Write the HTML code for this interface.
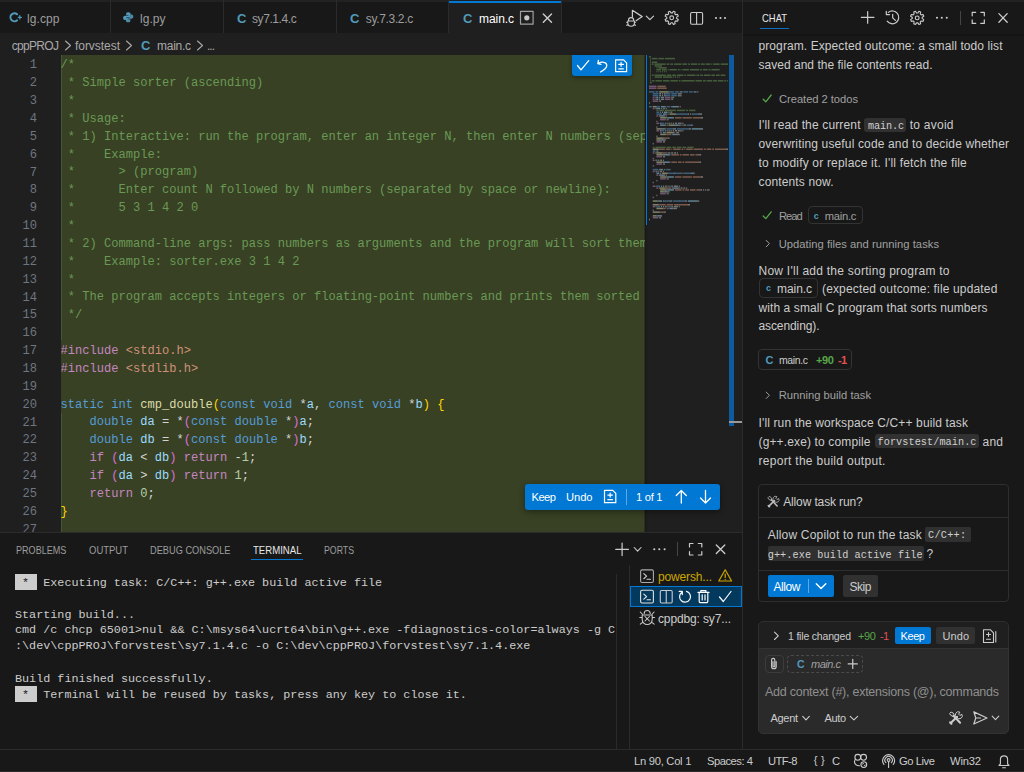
<!DOCTYPE html>
<html><head><meta charset="utf-8"><style>
html,body{margin:0;padding:0;}
body{width:1024px;height:772px;overflow:hidden;position:relative;background:#181818;font-family:'Liberation Sans', sans-serif;}
.t{position:absolute;white-space:pre;}
svg{overflow:visible}
</style></head><body>
<div style="position:absolute;left:0px;top:0px;width:1024px;height:772px;background:#181818;"></div>
<div style="position:absolute;left:0px;top:0px;width:742px;height:33px;background:#181818;"></div>
<div style="position:absolute;left:0px;top:0px;width:1024px;height:2px;background:#222222;"></div>
<div style="position:absolute;left:110px;top:0px;width:1px;height:33px;background:#2b2b2b;"></div>
<div style="position:absolute;left:223px;top:0px;width:1px;height:33px;background:#2b2b2b;"></div>
<div style="position:absolute;left:336px;top:0px;width:1px;height:33px;background:#2b2b2b;"></div>
<div style="position:absolute;left:448px;top:0px;width:1px;height:33px;background:#2b2b2b;"></div>
<div style="position:absolute;left:561px;top:0px;width:1px;height:33px;background:#2b2b2b;"></div>
<div style="position:absolute;left:449px;top:0px;width:112px;height:34px;background:#1f1f1f;"></div>
<div style="position:absolute;left:449px;top:1px;width:112px;height:2px;background:#0078d4;"></div>
<div style="position:absolute;left:0px;top:33px;width:742px;height:499px;background:#1f1f1f;"></div>
<div style="position:absolute;left:61px;top:55px;width:584px;height:477px;background:#384124;"></div>
<div style="position:absolute;left:61px;top:55px;width:1.2px;height:285px;background:#4a5535;"></div>
<div style="position:absolute;left:61px;top:413px;width:1.2px;height:119px;background:#4a5535;"></div>
<div style="position:absolute;left:729px;top:55px;width:5px;height:371px;background:#0e5a9e;"></div>
<div style="position:absolute;left:729px;top:421px;width:13px;height:2px;background:#9a9a9a;"></div>
<div style="position:absolute;left:644px;top:55px;width:4px;height:477px;background:linear-gradient(90deg, rgba(0,0,0,0.28), rgba(0,0,0,0));"></div>
<div style="position:absolute;left:645.8px;top:55px;width:1.4px;height:170px;background:#0078d4;"></div>
<div style="position:absolute;left:742px;top:0px;width:1px;height:750px;background:#2b2b2b;"></div>
<div style="position:absolute;left:0px;top:532px;width:742px;height:218px;background:#181818;"></div>
<div style="position:absolute;left:0px;top:532px;width:742px;height:1px;background:#2b2b2b;"></div>
<div style="position:absolute;left:616px;top:574px;width:1px;height:176px;background:#2a2a2a;"></div>
<div style="position:absolute;left:629px;top:565px;width:1px;height:185px;background:#2b2b2b;"></div>
<div style="position:absolute;left:630px;top:586px;width:112px;height:21px;background:#04395e;box-shadow:inset 0 0 0 1px #0078d4;"></div>
<div style="position:absolute;left:0px;top:749px;width:1024px;height:1px;background:#2b2b2b;"></div>
<div style="position:absolute;left:0px;top:750px;width:1024px;height:22px;background:#181818;"></div>
<div style="position:absolute;left:0px;top:771px;width:1024px;height:1px;background:#2a2a2a;"></div>
<div style="position:absolute;left:743px;top:33.5px;width:281px;height:3.5px;background:linear-gradient(#121212,#181818);"></div>
<div style="position:absolute;left:61px;top:55px;width:584px;height:477px;overflow:hidden"><div class="t" style="left:-0.4px;top:2.20px;font-family:'Liberation Mono', monospace;font-size:12.07px;line-height:17.86px"><span style="color:#6a9955">/*</span></div><div class="t" style="left:-0.4px;top:20.06px;font-family:'Liberation Mono', monospace;font-size:12.07px;line-height:17.86px"><span style="color:#6a9955"> * Simple sorter (ascending)</span></div><div class="t" style="left:-0.4px;top:37.92px;font-family:'Liberation Mono', monospace;font-size:12.07px;line-height:17.86px"><span style="color:#6a9955"> *</span></div><div class="t" style="left:-0.4px;top:55.78px;font-family:'Liberation Mono', monospace;font-size:12.07px;line-height:17.86px"><span style="color:#6a9955"> * Usage:</span></div><div class="t" style="left:-0.4px;top:73.64px;font-family:'Liberation Mono', monospace;font-size:12.07px;line-height:17.86px"><span style="color:#6a9955"> * 1) Interactive: run the program, enter an integer N, then enter N numbers (separated by space or newline).</span></div><div class="t" style="left:-0.4px;top:91.50px;font-family:'Liberation Mono', monospace;font-size:12.07px;line-height:17.86px"><span style="color:#6a9955"> *    Example:</span></div><div class="t" style="left:-0.4px;top:109.36px;font-family:'Liberation Mono', monospace;font-size:12.07px;line-height:17.86px"><span style="color:#6a9955"> *      &gt; (program)</span></div><div class="t" style="left:-0.4px;top:127.22px;font-family:'Liberation Mono', monospace;font-size:12.07px;line-height:17.86px"><span style="color:#6a9955"> *      Enter count N followed by N numbers (separated by space or newline):</span></div><div class="t" style="left:-0.4px;top:145.08px;font-family:'Liberation Mono', monospace;font-size:12.07px;line-height:17.86px"><span style="color:#6a9955"> *      5 3 1 4 2 0</span></div><div class="t" style="left:-0.4px;top:162.94px;font-family:'Liberation Mono', monospace;font-size:12.07px;line-height:17.86px"><span style="color:#6a9955"> *</span></div><div class="t" style="left:-0.4px;top:180.80px;font-family:'Liberation Mono', monospace;font-size:12.07px;line-height:17.86px"><span style="color:#6a9955"> * 2) Command-line args: pass numbers as arguments and the program will sort them.</span></div><div class="t" style="left:-0.4px;top:198.66px;font-family:'Liberation Mono', monospace;font-size:12.07px;line-height:17.86px"><span style="color:#6a9955"> *    Example: sorter.exe 3 1 4 2</span></div><div class="t" style="left:-0.4px;top:216.52px;font-family:'Liberation Mono', monospace;font-size:12.07px;line-height:17.86px"><span style="color:#6a9955"> *</span></div><div class="t" style="left:-0.4px;top:234.38px;font-family:'Liberation Mono', monospace;font-size:12.07px;line-height:17.86px"><span style="color:#6a9955"> * The program accepts integers or floating-point numbers and prints them sorted in ascending order.</span></div><div class="t" style="left:-0.4px;top:252.24px;font-family:'Liberation Mono', monospace;font-size:12.07px;line-height:17.86px"><span style="color:#6a9955"> */</span></div><div class="t" style="left:-0.4px;top:270.10px;font-family:'Liberation Mono', monospace;font-size:12.07px;line-height:17.86px"></div><div class="t" style="left:-0.4px;top:287.96px;font-family:'Liberation Mono', monospace;font-size:12.07px;line-height:17.86px"><span style="color:#c586c0">#include</span><span style="color:#d4d4d4"> </span><span style="color:#ce9178">&lt;stdio.h&gt;</span></div><div class="t" style="left:-0.4px;top:305.82px;font-family:'Liberation Mono', monospace;font-size:12.07px;line-height:17.86px"><span style="color:#c586c0">#include</span><span style="color:#d4d4d4"> </span><span style="color:#ce9178">&lt;stdlib.h&gt;</span></div><div class="t" style="left:-0.4px;top:323.68px;font-family:'Liberation Mono', monospace;font-size:12.07px;line-height:17.86px"></div><div class="t" style="left:-0.4px;top:341.54px;font-family:'Liberation Mono', monospace;font-size:12.07px;line-height:17.86px"><span style="color:#569cd6">static</span><span style="color:#d4d4d4"> </span><span style="color:#569cd6">int</span><span style="color:#d4d4d4"> </span><span style="color:#dcdcaa">cmp_double</span><span style="color:#ffd700">(</span><span style="color:#569cd6">const</span><span style="color:#d4d4d4"> </span><span style="color:#569cd6">void</span><span style="color:#d4d4d4"> *</span><span style="color:#9cdcfe">a</span><span style="color:#d4d4d4">, </span><span style="color:#569cd6">const</span><span style="color:#d4d4d4"> </span><span style="color:#569cd6">void</span><span style="color:#d4d4d4"> *</span><span style="color:#9cdcfe">b</span><span style="color:#ffd700">)</span><span style="color:#d4d4d4"> </span><span style="color:#ffd700">{</span></div><div class="t" style="left:-0.4px;top:359.40px;font-family:'Liberation Mono', monospace;font-size:12.07px;line-height:17.86px"><span style="color:#d4d4d4">    </span><span style="color:#569cd6">double</span><span style="color:#d4d4d4"> </span><span style="color:#9cdcfe">da</span><span style="color:#d4d4d4"> = *</span><span style="color:#da70d6">(</span><span style="color:#569cd6">const</span><span style="color:#d4d4d4"> </span><span style="color:#569cd6">double</span><span style="color:#d4d4d4"> *</span><span style="color:#da70d6">)</span><span style="color:#9cdcfe">a</span><span style="color:#d4d4d4">;</span></div><div class="t" style="left:-0.4px;top:377.26px;font-family:'Liberation Mono', monospace;font-size:12.07px;line-height:17.86px"><span style="color:#d4d4d4">    </span><span style="color:#569cd6">double</span><span style="color:#d4d4d4"> </span><span style="color:#9cdcfe">db</span><span style="color:#d4d4d4"> = *</span><span style="color:#da70d6">(</span><span style="color:#569cd6">const</span><span style="color:#d4d4d4"> </span><span style="color:#569cd6">double</span><span style="color:#d4d4d4"> *</span><span style="color:#da70d6">)</span><span style="color:#9cdcfe">b</span><span style="color:#d4d4d4">;</span></div><div class="t" style="left:-0.4px;top:395.12px;font-family:'Liberation Mono', monospace;font-size:12.07px;line-height:17.86px"><span style="color:#d4d4d4">    </span><span style="color:#c586c0">if</span><span style="color:#d4d4d4"> </span><span style="color:#da70d6">(</span><span style="color:#9cdcfe">da</span><span style="color:#d4d4d4"> &lt; </span><span style="color:#9cdcfe">db</span><span style="color:#da70d6">)</span><span style="color:#d4d4d4"> </span><span style="color:#c586c0">return</span><span style="color:#d4d4d4"> -</span><span style="color:#b5cea8">1</span><span style="color:#d4d4d4">;</span></div><div class="t" style="left:-0.4px;top:412.98px;font-family:'Liberation Mono', monospace;font-size:12.07px;line-height:17.86px"><span style="color:#d4d4d4">    </span><span style="color:#c586c0">if</span><span style="color:#d4d4d4"> </span><span style="color:#da70d6">(</span><span style="color:#9cdcfe">da</span><span style="color:#d4d4d4"> &gt; </span><span style="color:#9cdcfe">db</span><span style="color:#da70d6">)</span><span style="color:#d4d4d4"> </span><span style="color:#c586c0">return</span><span style="color:#d4d4d4"> </span><span style="color:#b5cea8">1</span><span style="color:#d4d4d4">;</span></div><div class="t" style="left:-0.4px;top:430.84px;font-family:'Liberation Mono', monospace;font-size:12.07px;line-height:17.86px"><span style="color:#d4d4d4">    </span><span style="color:#c586c0">return</span><span style="color:#d4d4d4"> </span><span style="color:#b5cea8">0</span><span style="color:#d4d4d4">;</span></div><div class="t" style="left:-0.4px;top:448.70px;font-family:'Liberation Mono', monospace;font-size:12.07px;line-height:17.86px"><span style="color:#ffd700">}</span></div><div class="t" style="left:-0.4px;top:466.56px;font-family:'Liberation Mono', monospace;font-size:12.07px;line-height:17.86px"></div></div>
<div style="position:absolute;left:0;top:55px;width:37px;height:477px;overflow:hidden"><div class="t" style="right:0;top:2.40px;font-family:'Liberation Mono', monospace;font-size:12.07px;line-height:17.86px;color:#6e7681">1</div><div class="t" style="right:0;top:20.26px;font-family:'Liberation Mono', monospace;font-size:12.07px;line-height:17.86px;color:#6e7681">2</div><div class="t" style="right:0;top:38.12px;font-family:'Liberation Mono', monospace;font-size:12.07px;line-height:17.86px;color:#6e7681">3</div><div class="t" style="right:0;top:55.98px;font-family:'Liberation Mono', monospace;font-size:12.07px;line-height:17.86px;color:#6e7681">4</div><div class="t" style="right:0;top:73.84px;font-family:'Liberation Mono', monospace;font-size:12.07px;line-height:17.86px;color:#6e7681">5</div><div class="t" style="right:0;top:91.70px;font-family:'Liberation Mono', monospace;font-size:12.07px;line-height:17.86px;color:#6e7681">6</div><div class="t" style="right:0;top:109.56px;font-family:'Liberation Mono', monospace;font-size:12.07px;line-height:17.86px;color:#6e7681">7</div><div class="t" style="right:0;top:127.42px;font-family:'Liberation Mono', monospace;font-size:12.07px;line-height:17.86px;color:#6e7681">8</div><div class="t" style="right:0;top:145.28px;font-family:'Liberation Mono', monospace;font-size:12.07px;line-height:17.86px;color:#6e7681">9</div><div class="t" style="right:0;top:163.14px;font-family:'Liberation Mono', monospace;font-size:12.07px;line-height:17.86px;color:#6e7681">10</div><div class="t" style="right:0;top:181.00px;font-family:'Liberation Mono', monospace;font-size:12.07px;line-height:17.86px;color:#6e7681">11</div><div class="t" style="right:0;top:198.86px;font-family:'Liberation Mono', monospace;font-size:12.07px;line-height:17.86px;color:#6e7681">12</div><div class="t" style="right:0;top:216.72px;font-family:'Liberation Mono', monospace;font-size:12.07px;line-height:17.86px;color:#6e7681">13</div><div class="t" style="right:0;top:234.58px;font-family:'Liberation Mono', monospace;font-size:12.07px;line-height:17.86px;color:#6e7681">14</div><div class="t" style="right:0;top:252.44px;font-family:'Liberation Mono', monospace;font-size:12.07px;line-height:17.86px;color:#6e7681">15</div><div class="t" style="right:0;top:270.30px;font-family:'Liberation Mono', monospace;font-size:12.07px;line-height:17.86px;color:#6e7681">16</div><div class="t" style="right:0;top:288.16px;font-family:'Liberation Mono', monospace;font-size:12.07px;line-height:17.86px;color:#6e7681">17</div><div class="t" style="right:0;top:306.02px;font-family:'Liberation Mono', monospace;font-size:12.07px;line-height:17.86px;color:#6e7681">18</div><div class="t" style="right:0;top:323.88px;font-family:'Liberation Mono', monospace;font-size:12.07px;line-height:17.86px;color:#6e7681">19</div><div class="t" style="right:0;top:341.74px;font-family:'Liberation Mono', monospace;font-size:12.07px;line-height:17.86px;color:#6e7681">20</div><div class="t" style="right:0;top:359.60px;font-family:'Liberation Mono', monospace;font-size:12.07px;line-height:17.86px;color:#6e7681">21</div><div class="t" style="right:0;top:377.46px;font-family:'Liberation Mono', monospace;font-size:12.07px;line-height:17.86px;color:#6e7681">22</div><div class="t" style="right:0;top:395.32px;font-family:'Liberation Mono', monospace;font-size:12.07px;line-height:17.86px;color:#6e7681">23</div><div class="t" style="right:0;top:413.18px;font-family:'Liberation Mono', monospace;font-size:12.07px;line-height:17.86px;color:#6e7681">24</div><div class="t" style="right:0;top:431.04px;font-family:'Liberation Mono', monospace;font-size:12.07px;line-height:17.86px;color:#6e7681">25</div><div class="t" style="right:0;top:448.90px;font-family:'Liberation Mono', monospace;font-size:12.07px;line-height:17.86px;color:#6e7681">26</div><div class="t" style="right:0;top:466.76px;font-family:'Liberation Mono', monospace;font-size:12.07px;line-height:17.86px;color:#6e7681">27</div></div>
<div style="position:absolute;left:15px;top:574px;width:22px;height:16px;background:#cccccc;"></div>
<div style="position:absolute;left:15px;top:686px;width:22px;height:16px;background:#cccccc;"></div>
<div style="position:absolute;left:0;top:620px;width:616px;height:40px;overflow:hidden"><div class="t" style="left:15px;top:4.20px;font-size:11.77px;line-height:13.333px;font-family:'Liberation Mono', monospace;color:#cccccc">cmd /c chcp 65001&gt;nul &amp;&amp; C:\msys64\ucrt64\bin\g++.exe -fdiagnostics-color=always -g C</div><div class="t" style="left:15px;top:20.20px;font-size:11.77px;line-height:13.333px;font-family:'Liberation Mono', monospace;color:#cccccc">:\dev\cppPROJ\forvstest\sy7.1.4.c -o C:\dev\cppPROJ\forvstest\sy7.1.4.exe</div></div>
<div style="position:absolute;left:251px;top:559px;width:52px;height:1px;background:#0078d4;"></div>
<div style="position:absolute;left:760px;top:28px;width:29px;height:1.3px;background:#0a6fc2;"></div>
<div style="position:absolute;left:864px;top:118.4px;width:42px;height:14px;background:#313131;border-radius:3px;"></div>
<div style="position:absolute;left:808px;top:206px;width:54.6px;height:18.2px;background:transparent;box-sizing:border-box;border:1px solid #333333;border-radius:4px;"></div>
<div style="position:absolute;left:759px;top:278.3px;width:59px;height:19.4px;background:transparent;box-sizing:border-box;border:1px solid #333333;border-radius:4px;"></div>
<div style="position:absolute;left:758px;top:349.2px;width:93.6px;height:20.4px;background:transparent;box-sizing:border-box;border:1px solid #333333;border-radius:4px;"></div>
<div style="position:absolute;left:875px;top:434.4px;width:104.2px;height:14.1px;background:#313131;border-radius:3px;"></div>
<div style="position:absolute;left:758px;top:484.4px;width:250.8px;height:117.7px;background:transparent;box-sizing:border-box;border:1px solid #2e2e2e;border-radius:4px;"></div>
<div style="position:absolute;left:759px;top:517px;width:249px;height:1px;background:#2e2e2e;"></div>
<div style="position:absolute;left:759px;top:569.5px;width:249px;height:1px;background:#2e2e2e;"></div>
<div style="position:absolute;left:925.4px;top:527.3px;width:45.4px;height:14.5px;background:#303030;border-radius:2px;"></div>
<div style="position:absolute;left:767.7px;top:546.4px;width:156.3px;height:14.4px;background:#303030;border-radius:2px;"></div>
<div style="position:absolute;left:767.7px;top:575px;width:66px;height:22px;background:#0078d4;border-radius:2px;"></div>
<div style="position:absolute;left:808px;top:579px;width:1px;height:14px;background:#5fa7e6;"></div>
<div style="position:absolute;left:843.3px;top:575px;width:34.5px;height:22px;background:#313131;border-radius:2px;"></div>
<div style="position:absolute;left:758.4px;top:621px;width:250.8px;height:113.4px;background:#1f1f1f;box-sizing:border-box;border:1px solid #2e2e2e;border-radius:5px;"></div>
<div style="position:absolute;left:758.4px;top:648.2px;width:250.8px;height:86.2px;background:#2a2a2a;border-radius:0 0 5px 5px;border:1px solid #333;box-sizing:border-box;"></div>
<div style="position:absolute;left:894.5px;top:627.4px;width:36.4px;height:16.3px;background:#0078d4;border-radius:2px;"></div>
<div style="position:absolute;left:936.4px;top:627.4px;width:38.2px;height:16.3px;background:#313131;border-radius:2px;"></div>
<div style="position:absolute;left:765px;top:655.3px;width:18.5px;height:18px;background:transparent;box-sizing:border-box;border:1px solid #3c3c3c;border-radius:4px;"></div>
<div style="position:absolute;left:787.4px;top:655.3px;width:76px;height:18px;background:transparent;box-sizing:border-box;border:1px dashed #4a4a4a;border-radius:4px;"></div>
<svg style="position:absolute;left:122.8px;top:12.3px;" width="10.5" height="10.5" viewBox="0 0 11 11" fill="none"><path d="M5.5 0.3C3.5 0.3 3.3 1.2 3.3 2.2V3.5H5.8V4H2.2C1 4 0.2 4.9 0.2 6.3C0.2 7.7 1 8.5 2 8.5H3V7C3 6 3.8 5.3 4.7 5.3H7C7.7 5.3 8 4.8 8 4.2V2.2C8 1.2 7.4 0.3 5.5 0.3Z" fill="#519aba"/><path d="M5.5 10.7C7.5 10.7 7.7 9.8 7.7 8.8V7.5H5.2V7H8.8C10 7 10.8 6.1 10.8 4.7C10.8 3.3 10 2.5 9 2.5H8V4C8 5 7.2 5.7 6.3 5.7H4C3.3 5.7 3 6.2 3 6.8V8.8C3 9.8 3.6 10.7 5.5 10.7Z" fill="#519aba" opacity="0.9"/></svg>
<div style="position:absolute;left:572px;top:55px;width:60px;height:21px;background:#0078d4;border-radius:0 0 3px 3px;box-shadow:0 2px 4px rgba(0,0,0,0.35);"></div>
<div style="position:absolute;left:525px;top:483.6px;width:194.6px;height:26px;background:#0078d4;border-radius:3px;box-shadow:0 2px 6px rgba(0,0,0,0.4);"></div>
<div style="position:absolute;left:626px;top:489px;width:1px;height:16px;background:#5fa7e6;"></div>
<div style="position:absolute;left:960px;top:10.7px;width:1px;height:14.3px;background:#454545;"></div>
<div style="position:absolute;left:677px;top:542px;width:1px;height:14px;background:#454545;"></div>
<svg style="position:absolute;left:649px;top:56.0px;" width="80" height="170" viewBox="0 0 80 170" fill="none"><g opacity="0.52"><rect x="0.00" y="0.00" width="1.86" height="1.5" fill="#6a9955"/><rect x="0.93" y="1.85" width="0.93" height="1.5" fill="#6a9955"/><rect x="2.79" y="1.85" width="5.58" height="1.5" fill="#6a9955"/><rect x="9.30" y="1.85" width="5.58" height="1.5" fill="#6a9955"/><rect x="15.81" y="1.85" width="10.23" height="1.5" fill="#6a9955"/><rect x="0.93" y="3.70" width="0.93" height="1.5" fill="#6a9955"/><rect x="0.93" y="5.55" width="0.93" height="1.5" fill="#6a9955"/><rect x="2.79" y="5.55" width="5.58" height="1.5" fill="#6a9955"/><rect x="0.93" y="7.40" width="0.93" height="1.5" fill="#6a9955"/><rect x="2.79" y="7.40" width="1.86" height="1.5" fill="#6a9955"/><rect x="5.58" y="7.40" width="11.16" height="1.5" fill="#6a9955"/><rect x="17.67" y="7.40" width="2.79" height="1.5" fill="#6a9955"/><rect x="21.39" y="7.40" width="2.79" height="1.5" fill="#6a9955"/><rect x="25.11" y="7.40" width="7.44" height="1.5" fill="#6a9955"/><rect x="33.48" y="7.40" width="4.65" height="1.5" fill="#6a9955"/><rect x="39.06" y="7.40" width="1.86" height="1.5" fill="#6a9955"/><rect x="41.85" y="7.40" width="6.51" height="1.5" fill="#6a9955"/><rect x="49.29" y="7.40" width="1.86" height="1.5" fill="#6a9955"/><rect x="52.08" y="7.40" width="3.72" height="1.5" fill="#6a9955"/><rect x="56.73" y="7.40" width="4.65" height="1.5" fill="#6a9955"/><rect x="62.31" y="7.40" width="0.93" height="1.5" fill="#6a9955"/><rect x="64.17" y="7.40" width="6.51" height="1.5" fill="#6a9955"/><rect x="71.61" y="7.40" width="7.39" height="1.5" fill="#6a9955"/><rect x="0.93" y="9.25" width="0.93" height="1.5" fill="#6a9955"/><rect x="5.58" y="9.25" width="7.44" height="1.5" fill="#6a9955"/><rect x="0.93" y="11.10" width="0.93" height="1.5" fill="#6a9955"/><rect x="7.44" y="11.10" width="0.93" height="1.5" fill="#6a9955"/><rect x="9.30" y="11.10" width="8.37" height="1.5" fill="#6a9955"/><rect x="0.93" y="12.95" width="0.93" height="1.5" fill="#6a9955"/><rect x="7.44" y="12.95" width="4.65" height="1.5" fill="#6a9955"/><rect x="13.02" y="12.95" width="4.65" height="1.5" fill="#6a9955"/><rect x="18.60" y="12.95" width="0.93" height="1.5" fill="#6a9955"/><rect x="20.46" y="12.95" width="7.44" height="1.5" fill="#6a9955"/><rect x="28.83" y="12.95" width="1.86" height="1.5" fill="#6a9955"/><rect x="31.62" y="12.95" width="0.93" height="1.5" fill="#6a9955"/><rect x="33.48" y="12.95" width="6.51" height="1.5" fill="#6a9955"/><rect x="40.92" y="12.95" width="9.30" height="1.5" fill="#6a9955"/><rect x="51.15" y="12.95" width="1.86" height="1.5" fill="#6a9955"/><rect x="53.94" y="12.95" width="4.65" height="1.5" fill="#6a9955"/><rect x="59.52" y="12.95" width="1.86" height="1.5" fill="#6a9955"/><rect x="62.31" y="12.95" width="8.37" height="1.5" fill="#6a9955"/><rect x="0.93" y="14.80" width="0.93" height="1.5" fill="#6a9955"/><rect x="7.44" y="14.80" width="0.93" height="1.5" fill="#6a9955"/><rect x="9.30" y="14.80" width="0.93" height="1.5" fill="#6a9955"/><rect x="11.16" y="14.80" width="0.93" height="1.5" fill="#6a9955"/><rect x="13.02" y="14.80" width="0.93" height="1.5" fill="#6a9955"/><rect x="14.88" y="14.80" width="0.93" height="1.5" fill="#6a9955"/><rect x="16.74" y="14.80" width="0.93" height="1.5" fill="#6a9955"/><rect x="0.93" y="16.65" width="0.93" height="1.5" fill="#6a9955"/><rect x="0.93" y="18.50" width="0.93" height="1.5" fill="#6a9955"/><rect x="2.79" y="18.50" width="1.86" height="1.5" fill="#6a9955"/><rect x="5.58" y="18.50" width="11.16" height="1.5" fill="#6a9955"/><rect x="17.67" y="18.50" width="4.65" height="1.5" fill="#6a9955"/><rect x="23.25" y="18.50" width="3.72" height="1.5" fill="#6a9955"/><rect x="27.90" y="18.50" width="6.51" height="1.5" fill="#6a9955"/><rect x="35.34" y="18.50" width="1.86" height="1.5" fill="#6a9955"/><rect x="38.13" y="18.50" width="8.37" height="1.5" fill="#6a9955"/><rect x="47.43" y="18.50" width="2.79" height="1.5" fill="#6a9955"/><rect x="51.15" y="18.50" width="2.79" height="1.5" fill="#6a9955"/><rect x="54.87" y="18.50" width="6.51" height="1.5" fill="#6a9955"/><rect x="62.31" y="18.50" width="3.72" height="1.5" fill="#6a9955"/><rect x="66.96" y="18.50" width="3.72" height="1.5" fill="#6a9955"/><rect x="71.61" y="18.50" width="4.65" height="1.5" fill="#6a9955"/><rect x="0.93" y="20.35" width="0.93" height="1.5" fill="#6a9955"/><rect x="5.58" y="20.35" width="7.44" height="1.5" fill="#6a9955"/><rect x="13.95" y="20.35" width="9.30" height="1.5" fill="#6a9955"/><rect x="24.18" y="20.35" width="0.93" height="1.5" fill="#6a9955"/><rect x="26.04" y="20.35" width="0.93" height="1.5" fill="#6a9955"/><rect x="27.90" y="20.35" width="0.93" height="1.5" fill="#6a9955"/><rect x="29.76" y="20.35" width="0.93" height="1.5" fill="#6a9955"/><rect x="0.93" y="22.20" width="0.93" height="1.5" fill="#6a9955"/><rect x="0.93" y="24.05" width="0.93" height="1.5" fill="#6a9955"/><rect x="2.79" y="24.05" width="2.79" height="1.5" fill="#6a9955"/><rect x="6.51" y="24.05" width="6.51" height="1.5" fill="#6a9955"/><rect x="13.95" y="24.05" width="6.51" height="1.5" fill="#6a9955"/><rect x="21.39" y="24.05" width="7.44" height="1.5" fill="#6a9955"/><rect x="29.76" y="24.05" width="1.86" height="1.5" fill="#6a9955"/><rect x="32.55" y="24.05" width="13.02" height="1.5" fill="#6a9955"/><rect x="46.50" y="24.05" width="6.51" height="1.5" fill="#6a9955"/><rect x="53.94" y="24.05" width="2.79" height="1.5" fill="#6a9955"/><rect x="57.66" y="24.05" width="5.58" height="1.5" fill="#6a9955"/><rect x="64.17" y="24.05" width="3.72" height="1.5" fill="#6a9955"/><rect x="68.82" y="24.05" width="5.58" height="1.5" fill="#6a9955"/><rect x="75.33" y="24.05" width="1.86" height="1.5" fill="#6a9955"/><rect x="78.12" y="24.05" width="0.88" height="1.5" fill="#6a9955"/><rect x="0.93" y="25.90" width="1.86" height="1.5" fill="#6a9955"/><rect x="0.00" y="29.60" width="7.44" height="1.5" fill="#c586c0"/><rect x="8.37" y="29.60" width="8.37" height="1.5" fill="#ce9178"/><rect x="0.00" y="31.45" width="7.44" height="1.5" fill="#c586c0"/><rect x="8.37" y="31.45" width="9.30" height="1.5" fill="#ce9178"/><rect x="0.00" y="35.15" width="5.58" height="1.5" fill="#569cd6"/><rect x="6.51" y="35.15" width="2.79" height="1.5" fill="#569cd6"/><rect x="10.23" y="35.15" width="9.30" height="1.5" fill="#dcdcaa"/><rect x="19.53" y="35.15" width="0.93" height="1.5" fill="#d4d4d4"/><rect x="20.46" y="35.15" width="4.65" height="1.5" fill="#569cd6"/><rect x="26.04" y="35.15" width="3.72" height="1.5" fill="#569cd6"/><rect x="30.69" y="35.15" width="0.93" height="1.5" fill="#d4d4d4"/><rect x="31.62" y="35.15" width="0.93" height="1.5" fill="#9cdcfe"/><rect x="32.55" y="35.15" width="0.93" height="1.5" fill="#d4d4d4"/><rect x="34.41" y="35.15" width="4.65" height="1.5" fill="#569cd6"/><rect x="39.99" y="35.15" width="3.72" height="1.5" fill="#569cd6"/><rect x="44.64" y="35.15" width="0.93" height="1.5" fill="#d4d4d4"/><rect x="45.57" y="35.15" width="0.93" height="1.5" fill="#9cdcfe"/><rect x="46.50" y="35.15" width="0.93" height="1.5" fill="#d4d4d4"/><rect x="48.36" y="35.15" width="0.93" height="1.5" fill="#d4d4d4"/><rect x="3.72" y="37.00" width="5.58" height="1.5" fill="#569cd6"/><rect x="10.23" y="37.00" width="1.86" height="1.5" fill="#9cdcfe"/><rect x="13.02" y="37.00" width="0.93" height="1.5" fill="#d4d4d4"/><rect x="14.88" y="37.00" width="0.93" height="1.5" fill="#d4d4d4"/><rect x="15.81" y="37.00" width="0.93" height="1.5" fill="#d4d4d4"/><rect x="16.74" y="37.00" width="4.65" height="1.5" fill="#569cd6"/><rect x="22.32" y="37.00" width="5.58" height="1.5" fill="#569cd6"/><rect x="28.83" y="37.00" width="0.93" height="1.5" fill="#d4d4d4"/><rect x="29.76" y="37.00" width="0.93" height="1.5" fill="#d4d4d4"/><rect x="30.69" y="37.00" width="0.93" height="1.5" fill="#9cdcfe"/><rect x="31.62" y="37.00" width="0.93" height="1.5" fill="#d4d4d4"/><rect x="3.72" y="38.85" width="5.58" height="1.5" fill="#569cd6"/><rect x="10.23" y="38.85" width="1.86" height="1.5" fill="#9cdcfe"/><rect x="13.02" y="38.85" width="0.93" height="1.5" fill="#d4d4d4"/><rect x="14.88" y="38.85" width="0.93" height="1.5" fill="#d4d4d4"/><rect x="15.81" y="38.85" width="0.93" height="1.5" fill="#d4d4d4"/><rect x="16.74" y="38.85" width="4.65" height="1.5" fill="#569cd6"/><rect x="22.32" y="38.85" width="5.58" height="1.5" fill="#569cd6"/><rect x="28.83" y="38.85" width="0.93" height="1.5" fill="#d4d4d4"/><rect x="29.76" y="38.85" width="0.93" height="1.5" fill="#d4d4d4"/><rect x="30.69" y="38.85" width="0.93" height="1.5" fill="#9cdcfe"/><rect x="31.62" y="38.85" width="0.93" height="1.5" fill="#d4d4d4"/><rect x="3.72" y="40.70" width="1.86" height="1.5" fill="#c586c0"/><rect x="6.51" y="40.70" width="0.93" height="1.5" fill="#d4d4d4"/><rect x="7.44" y="40.70" width="1.86" height="1.5" fill="#9cdcfe"/><rect x="10.23" y="40.70" width="0.93" height="1.5" fill="#d4d4d4"/><rect x="12.09" y="40.70" width="1.86" height="1.5" fill="#9cdcfe"/><rect x="13.95" y="40.70" width="0.93" height="1.5" fill="#d4d4d4"/><rect x="15.81" y="40.70" width="5.58" height="1.5" fill="#c586c0"/><rect x="22.32" y="40.70" width="0.93" height="1.5" fill="#d4d4d4"/><rect x="23.25" y="40.70" width="0.93" height="1.5" fill="#b5cea8"/><rect x="24.18" y="40.70" width="0.93" height="1.5" fill="#d4d4d4"/><rect x="3.72" y="42.55" width="1.86" height="1.5" fill="#c586c0"/><rect x="6.51" y="42.55" width="0.93" height="1.5" fill="#d4d4d4"/><rect x="7.44" y="42.55" width="1.86" height="1.5" fill="#9cdcfe"/><rect x="10.23" y="42.55" width="0.93" height="1.5" fill="#d4d4d4"/><rect x="12.09" y="42.55" width="1.86" height="1.5" fill="#9cdcfe"/><rect x="13.95" y="42.55" width="0.93" height="1.5" fill="#d4d4d4"/><rect x="15.81" y="42.55" width="5.58" height="1.5" fill="#c586c0"/><rect x="22.32" y="42.55" width="0.93" height="1.5" fill="#b5cea8"/><rect x="23.25" y="42.55" width="0.93" height="1.5" fill="#d4d4d4"/><rect x="3.72" y="44.40" width="5.58" height="1.5" fill="#c586c0"/><rect x="10.23" y="44.40" width="0.93" height="1.5" fill="#b5cea8"/><rect x="11.16" y="44.40" width="0.93" height="1.5" fill="#d4d4d4"/><rect x="0.00" y="46.25" width="0.93" height="1.5" fill="#d4d4d4"/><rect x="0.00" y="49.95" width="2.79" height="1.5" fill="#569cd6"/><rect x="3.72" y="49.95" width="3.72" height="1.5" fill="#dcdcaa"/><rect x="7.44" y="49.95" width="0.93" height="1.5" fill="#d4d4d4"/><rect x="8.37" y="49.95" width="2.79" height="1.5" fill="#569cd6"/><rect x="12.09" y="49.95" width="3.72" height="1.5" fill="#9cdcfe"/><rect x="15.81" y="49.95" width="0.93" height="1.5" fill="#d4d4d4"/><rect x="17.67" y="49.95" width="3.72" height="1.5" fill="#569cd6"/><rect x="22.32" y="49.95" width="0.93" height="1.5" fill="#d4d4d4"/><rect x="23.25" y="49.95" width="3.72" height="1.5" fill="#9cdcfe"/><rect x="26.97" y="49.95" width="0.93" height="1.5" fill="#d4d4d4"/><rect x="27.90" y="49.95" width="0.93" height="1.5" fill="#d4d4d4"/><rect x="28.83" y="49.95" width="0.93" height="1.5" fill="#d4d4d4"/><rect x="30.69" y="49.95" width="0.93" height="1.5" fill="#d4d4d4"/><rect x="3.72" y="51.80" width="1.86" height="1.5" fill="#c586c0"/><rect x="6.51" y="51.80" width="0.93" height="1.5" fill="#d4d4d4"/><rect x="7.44" y="51.80" width="3.72" height="1.5" fill="#9cdcfe"/><rect x="12.09" y="51.80" width="0.93" height="1.5" fill="#d4d4d4"/><rect x="13.95" y="51.80" width="0.93" height="1.5" fill="#b5cea8"/><rect x="14.88" y="51.80" width="0.93" height="1.5" fill="#d4d4d4"/><rect x="16.74" y="51.80" width="0.93" height="1.5" fill="#d4d4d4"/><rect x="7.44" y="53.65" width="1.86" height="1.5" fill="#6a9955"/><rect x="10.23" y="53.65" width="4.65" height="1.5" fill="#6a9955"/><rect x="15.81" y="53.65" width="11.16" height="1.5" fill="#6a9955"/><rect x="27.90" y="53.65" width="8.37" height="1.5" fill="#6a9955"/><rect x="37.20" y="53.65" width="1.86" height="1.5" fill="#6a9955"/><rect x="39.99" y="53.65" width="6.51" height="1.5" fill="#6a9955"/><rect x="7.44" y="55.50" width="2.79" height="1.5" fill="#569cd6"/><rect x="11.16" y="55.50" width="0.93" height="1.5" fill="#9cdcfe"/><rect x="13.02" y="55.50" width="0.93" height="1.5" fill="#d4d4d4"/><rect x="14.88" y="55.50" width="3.72" height="1.5" fill="#9cdcfe"/><rect x="19.53" y="55.50" width="0.93" height="1.5" fill="#d4d4d4"/><rect x="21.39" y="55.50" width="0.93" height="1.5" fill="#b5cea8"/><rect x="22.32" y="55.50" width="0.93" height="1.5" fill="#d4d4d4"/><rect x="7.44" y="57.35" width="5.58" height="1.5" fill="#569cd6"/><rect x="13.95" y="57.35" width="0.93" height="1.5" fill="#d4d4d4"/><rect x="14.88" y="57.35" width="2.79" height="1.5" fill="#9cdcfe"/><rect x="18.60" y="57.35" width="0.93" height="1.5" fill="#d4d4d4"/><rect x="20.46" y="57.35" width="5.58" height="1.5" fill="#dcdcaa"/><rect x="26.04" y="57.35" width="0.93" height="1.5" fill="#d4d4d4"/><rect x="26.97" y="57.35" width="5.58" height="1.5" fill="#569cd6"/><rect x="32.55" y="57.35" width="0.93" height="1.5" fill="#d4d4d4"/><rect x="33.48" y="57.35" width="5.58" height="1.5" fill="#569cd6"/><rect x="39.06" y="57.35" width="0.93" height="1.5" fill="#d4d4d4"/><rect x="40.92" y="57.35" width="0.93" height="1.5" fill="#d4d4d4"/><rect x="42.78" y="57.35" width="0.93" height="1.5" fill="#d4d4d4"/><rect x="43.71" y="57.35" width="5.58" height="1.5" fill="#569cd6"/><rect x="49.29" y="57.35" width="0.93" height="1.5" fill="#d4d4d4"/><rect x="50.22" y="57.35" width="0.93" height="1.5" fill="#9cdcfe"/><rect x="51.15" y="57.35" width="0.93" height="1.5" fill="#d4d4d4"/><rect x="52.08" y="57.35" width="0.93" height="1.5" fill="#d4d4d4"/><rect x="7.44" y="59.20" width="1.86" height="1.5" fill="#c586c0"/><rect x="10.23" y="59.20" width="0.93" height="1.5" fill="#d4d4d4"/><rect x="11.16" y="59.20" width="0.93" height="1.5" fill="#d4d4d4"/><rect x="12.09" y="59.20" width="2.79" height="1.5" fill="#9cdcfe"/><rect x="14.88" y="59.20" width="0.93" height="1.5" fill="#d4d4d4"/><rect x="16.74" y="59.20" width="0.93" height="1.5" fill="#d4d4d4"/><rect x="11.16" y="61.05" width="6.51" height="1.5" fill="#dcdcaa"/><rect x="17.67" y="61.05" width="0.93" height="1.5" fill="#d4d4d4"/><rect x="18.60" y="61.05" width="5.58" height="1.5" fill="#9cdcfe"/><rect x="24.18" y="61.05" width="0.93" height="1.5" fill="#d4d4d4"/><rect x="26.04" y="61.05" width="6.51" height="1.5" fill="#ce9178"/><rect x="33.48" y="61.05" width="9.30" height="1.5" fill="#ce9178"/><rect x="43.71" y="61.05" width="8.37" height="1.5" fill="#ce9178"/><rect x="52.08" y="61.05" width="0.93" height="1.5" fill="#d4d4d4"/><rect x="53.01" y="61.05" width="0.93" height="1.5" fill="#d4d4d4"/><rect x="11.16" y="62.90" width="5.58" height="1.5" fill="#c586c0"/><rect x="17.67" y="62.90" width="0.93" height="1.5" fill="#b5cea8"/><rect x="18.60" y="62.90" width="0.93" height="1.5" fill="#d4d4d4"/><rect x="7.44" y="64.75" width="0.93" height="1.5" fill="#d4d4d4"/><rect x="7.44" y="66.60" width="2.79" height="1.5" fill="#c586c0"/><rect x="11.16" y="66.60" width="0.93" height="1.5" fill="#d4d4d4"/><rect x="12.09" y="66.60" width="2.79" height="1.5" fill="#569cd6"/><rect x="15.81" y="66.60" width="0.93" height="1.5" fill="#9cdcfe"/><rect x="17.67" y="66.60" width="0.93" height="1.5" fill="#d4d4d4"/><rect x="19.53" y="66.60" width="0.93" height="1.5" fill="#b5cea8"/><rect x="20.46" y="66.60" width="0.93" height="1.5" fill="#d4d4d4"/><rect x="22.32" y="66.60" width="0.93" height="1.5" fill="#9cdcfe"/><rect x="24.18" y="66.60" width="0.93" height="1.5" fill="#d4d4d4"/><rect x="26.04" y="66.60" width="0.93" height="1.5" fill="#9cdcfe"/><rect x="26.97" y="66.60" width="0.93" height="1.5" fill="#d4d4d4"/><rect x="28.83" y="66.60" width="0.93" height="1.5" fill="#d4d4d4"/><rect x="29.76" y="66.60" width="0.93" height="1.5" fill="#d4d4d4"/><rect x="30.69" y="66.60" width="0.93" height="1.5" fill="#9cdcfe"/><rect x="31.62" y="66.60" width="0.93" height="1.5" fill="#d4d4d4"/><rect x="33.48" y="66.60" width="0.93" height="1.5" fill="#d4d4d4"/><rect x="11.16" y="68.45" width="2.79" height="1.5" fill="#9cdcfe"/><rect x="13.95" y="68.45" width="0.93" height="1.5" fill="#d4d4d4"/><rect x="14.88" y="68.45" width="0.93" height="1.5" fill="#9cdcfe"/><rect x="15.81" y="68.45" width="0.93" height="1.5" fill="#d4d4d4"/><rect x="17.67" y="68.45" width="0.93" height="1.5" fill="#d4d4d4"/><rect x="19.53" y="68.45" width="5.58" height="1.5" fill="#dcdcaa"/><rect x="25.11" y="68.45" width="0.93" height="1.5" fill="#d4d4d4"/><rect x="26.04" y="68.45" width="3.72" height="1.5" fill="#9cdcfe"/><rect x="29.76" y="68.45" width="0.93" height="1.5" fill="#d4d4d4"/><rect x="30.69" y="68.45" width="0.93" height="1.5" fill="#9cdcfe"/><rect x="32.55" y="68.45" width="0.93" height="1.5" fill="#d4d4d4"/><rect x="34.41" y="68.45" width="0.93" height="1.5" fill="#b5cea8"/><rect x="35.34" y="68.45" width="0.93" height="1.5" fill="#d4d4d4"/><rect x="36.27" y="68.45" width="0.93" height="1.5" fill="#d4d4d4"/><rect x="38.13" y="68.45" width="3.72" height="1.5" fill="#569cd6"/><rect x="41.85" y="68.45" width="0.93" height="1.5" fill="#d4d4d4"/><rect x="42.78" y="68.45" width="0.93" height="1.5" fill="#d4d4d4"/><rect x="7.44" y="70.30" width="0.93" height="1.5" fill="#d4d4d4"/><rect x="7.44" y="72.15" width="4.65" height="1.5" fill="#dcdcaa"/><rect x="12.09" y="72.15" width="0.93" height="1.5" fill="#d4d4d4"/><rect x="13.02" y="72.15" width="2.79" height="1.5" fill="#9cdcfe"/><rect x="15.81" y="72.15" width="0.93" height="1.5" fill="#d4d4d4"/><rect x="17.67" y="72.15" width="0.93" height="1.5" fill="#d4d4d4"/><rect x="18.60" y="72.15" width="5.58" height="1.5" fill="#569cd6"/><rect x="24.18" y="72.15" width="0.93" height="1.5" fill="#d4d4d4"/><rect x="25.11" y="72.15" width="0.93" height="1.5" fill="#9cdcfe"/><rect x="26.04" y="72.15" width="0.93" height="1.5" fill="#d4d4d4"/><rect x="27.90" y="72.15" width="5.58" height="1.5" fill="#569cd6"/><rect x="33.48" y="72.15" width="0.93" height="1.5" fill="#d4d4d4"/><rect x="34.41" y="72.15" width="5.58" height="1.5" fill="#569cd6"/><rect x="39.99" y="72.15" width="0.93" height="1.5" fill="#d4d4d4"/><rect x="40.92" y="72.15" width="0.93" height="1.5" fill="#d4d4d4"/><rect x="42.78" y="72.15" width="9.30" height="1.5" fill="#9cdcfe"/><rect x="52.08" y="72.15" width="0.93" height="1.5" fill="#d4d4d4"/><rect x="53.01" y="72.15" width="0.93" height="1.5" fill="#d4d4d4"/><rect x="7.44" y="74.00" width="2.79" height="1.5" fill="#c586c0"/><rect x="11.16" y="74.00" width="0.93" height="1.5" fill="#d4d4d4"/><rect x="12.09" y="74.00" width="2.79" height="1.5" fill="#569cd6"/><rect x="15.81" y="74.00" width="0.93" height="1.5" fill="#9cdcfe"/><rect x="17.67" y="74.00" width="0.93" height="1.5" fill="#d4d4d4"/><rect x="19.53" y="74.00" width="0.93" height="1.5" fill="#b5cea8"/><rect x="20.46" y="74.00" width="0.93" height="1.5" fill="#d4d4d4"/><rect x="22.32" y="74.00" width="0.93" height="1.5" fill="#9cdcfe"/><rect x="24.18" y="74.00" width="0.93" height="1.5" fill="#d4d4d4"/><rect x="26.04" y="74.00" width="0.93" height="1.5" fill="#9cdcfe"/><rect x="26.97" y="74.00" width="0.93" height="1.5" fill="#d4d4d4"/><rect x="28.83" y="74.00" width="0.93" height="1.5" fill="#d4d4d4"/><rect x="29.76" y="74.00" width="0.93" height="1.5" fill="#d4d4d4"/><rect x="30.69" y="74.00" width="0.93" height="1.5" fill="#9cdcfe"/><rect x="31.62" y="74.00" width="0.93" height="1.5" fill="#d4d4d4"/><rect x="33.48" y="74.00" width="0.93" height="1.5" fill="#d4d4d4"/><rect x="11.16" y="75.85" width="1.86" height="1.5" fill="#c586c0"/><rect x="13.95" y="75.85" width="0.93" height="1.5" fill="#d4d4d4"/><rect x="14.88" y="75.85" width="0.93" height="1.5" fill="#9cdcfe"/><rect x="15.81" y="75.85" width="0.93" height="1.5" fill="#d4d4d4"/><rect x="17.67" y="75.85" width="6.51" height="1.5" fill="#dcdcaa"/><rect x="24.18" y="75.85" width="0.93" height="1.5" fill="#d4d4d4"/><rect x="25.11" y="75.85" width="0.93" height="1.5" fill="#ce9178"/><rect x="26.97" y="75.85" width="0.93" height="1.5" fill="#ce9178"/><rect x="27.90" y="75.85" width="0.93" height="1.5" fill="#d4d4d4"/><rect x="28.83" y="75.85" width="0.93" height="1.5" fill="#d4d4d4"/><rect x="11.16" y="77.70" width="5.58" height="1.5" fill="#dcdcaa"/><rect x="16.74" y="77.70" width="0.93" height="1.5" fill="#d4d4d4"/><rect x="17.67" y="77.70" width="3.72" height="1.5" fill="#ce9178"/><rect x="21.39" y="77.70" width="0.93" height="1.5" fill="#d4d4d4"/><rect x="23.25" y="77.70" width="2.79" height="1.5" fill="#9cdcfe"/><rect x="26.04" y="77.70" width="0.93" height="1.5" fill="#d4d4d4"/><rect x="26.97" y="77.70" width="0.93" height="1.5" fill="#9cdcfe"/><rect x="27.90" y="77.70" width="0.93" height="1.5" fill="#d4d4d4"/><rect x="28.83" y="77.70" width="0.93" height="1.5" fill="#d4d4d4"/><rect x="29.76" y="77.70" width="0.93" height="1.5" fill="#d4d4d4"/><rect x="7.44" y="79.55" width="0.93" height="1.5" fill="#d4d4d4"/><rect x="7.44" y="81.40" width="6.51" height="1.5" fill="#dcdcaa"/><rect x="13.95" y="81.40" width="0.93" height="1.5" fill="#d4d4d4"/><rect x="14.88" y="81.40" width="3.72" height="1.5" fill="#ce9178"/><rect x="18.60" y="81.40" width="0.93" height="1.5" fill="#d4d4d4"/><rect x="19.53" y="81.40" width="0.93" height="1.5" fill="#d4d4d4"/><rect x="7.44" y="83.25" width="3.72" height="1.5" fill="#dcdcaa"/><rect x="11.16" y="83.25" width="0.93" height="1.5" fill="#d4d4d4"/><rect x="12.09" y="83.25" width="2.79" height="1.5" fill="#9cdcfe"/><rect x="14.88" y="83.25" width="0.93" height="1.5" fill="#d4d4d4"/><rect x="15.81" y="83.25" width="0.93" height="1.5" fill="#d4d4d4"/><rect x="7.44" y="85.10" width="5.58" height="1.5" fill="#c586c0"/><rect x="13.95" y="85.10" width="0.93" height="1.5" fill="#b5cea8"/><rect x="14.88" y="85.10" width="0.93" height="1.5" fill="#d4d4d4"/><rect x="3.72" y="86.95" width="0.93" height="1.5" fill="#d4d4d4"/><rect x="3.72" y="90.65" width="1.86" height="1.5" fill="#6a9955"/><rect x="6.51" y="90.65" width="10.23" height="1.5" fill="#6a9955"/><rect x="17.67" y="90.65" width="4.65" height="1.5" fill="#6a9955"/><rect x="23.25" y="90.65" width="3.72" height="1.5" fill="#6a9955"/><rect x="27.90" y="90.65" width="4.65" height="1.5" fill="#6a9955"/><rect x="33.48" y="90.65" width="3.72" height="1.5" fill="#6a9955"/><rect x="38.13" y="90.65" width="6.51" height="1.5" fill="#6a9955"/><rect x="3.72" y="92.50" width="5.58" height="1.5" fill="#dcdcaa"/><rect x="9.30" y="92.50" width="0.93" height="1.5" fill="#d4d4d4"/><rect x="10.23" y="92.50" width="5.58" height="1.5" fill="#ce9178"/><rect x="16.74" y="92.50" width="4.65" height="1.5" fill="#ce9178"/><rect x="22.32" y="92.50" width="0.93" height="1.5" fill="#ce9178"/><rect x="24.18" y="92.50" width="7.44" height="1.5" fill="#ce9178"/><rect x="32.55" y="92.50" width="1.86" height="1.5" fill="#ce9178"/><rect x="35.34" y="92.50" width="0.93" height="1.5" fill="#ce9178"/><rect x="37.20" y="92.50" width="6.51" height="1.5" fill="#ce9178"/><rect x="44.64" y="92.50" width="9.30" height="1.5" fill="#ce9178"/><rect x="54.87" y="92.50" width="1.86" height="1.5" fill="#ce9178"/><rect x="57.66" y="92.50" width="4.65" height="1.5" fill="#ce9178"/><rect x="63.24" y="92.50" width="1.86" height="1.5" fill="#ce9178"/><rect x="66.03" y="92.50" width="11.16" height="1.5" fill="#ce9178"/><rect x="77.19" y="92.50" width="0.93" height="1.5" fill="#d4d4d4"/><rect x="78.12" y="92.50" width="0.88" height="1.5" fill="#d4d4d4"/><rect x="3.72" y="94.35" width="2.79" height="1.5" fill="#569cd6"/><rect x="7.44" y="94.35" width="0.93" height="1.5" fill="#9cdcfe"/><rect x="8.37" y="94.35" width="0.93" height="1.5" fill="#d4d4d4"/><rect x="3.72" y="96.20" width="1.86" height="1.5" fill="#c586c0"/><rect x="6.51" y="96.20" width="0.93" height="1.5" fill="#d4d4d4"/><rect x="7.44" y="96.20" width="4.65" height="1.5" fill="#dcdcaa"/><rect x="12.09" y="96.20" width="0.93" height="1.5" fill="#d4d4d4"/><rect x="13.02" y="96.20" width="3.72" height="1.5" fill="#ce9178"/><rect x="16.74" y="96.20" width="0.93" height="1.5" fill="#d4d4d4"/><rect x="18.60" y="96.20" width="0.93" height="1.5" fill="#d4d4d4"/><rect x="19.53" y="96.20" width="0.93" height="1.5" fill="#9cdcfe"/><rect x="20.46" y="96.20" width="0.93" height="1.5" fill="#d4d4d4"/><rect x="22.32" y="96.20" width="0.93" height="1.5" fill="#d4d4d4"/><rect x="23.25" y="96.20" width="0.93" height="1.5" fill="#d4d4d4"/><rect x="25.11" y="96.20" width="0.93" height="1.5" fill="#b5cea8"/><rect x="26.04" y="96.20" width="0.93" height="1.5" fill="#d4d4d4"/><rect x="27.90" y="96.20" width="0.93" height="1.5" fill="#d4d4d4"/><rect x="7.44" y="98.05" width="6.51" height="1.5" fill="#dcdcaa"/><rect x="13.95" y="98.05" width="0.93" height="1.5" fill="#d4d4d4"/><rect x="14.88" y="98.05" width="5.58" height="1.5" fill="#9cdcfe"/><rect x="20.46" y="98.05" width="0.93" height="1.5" fill="#d4d4d4"/><rect x="22.32" y="98.05" width="7.44" height="1.5" fill="#ce9178"/><rect x="30.69" y="98.05" width="1.86" height="1.5" fill="#ce9178"/><rect x="33.48" y="98.05" width="6.51" height="1.5" fill="#ce9178"/><rect x="40.92" y="98.05" width="4.65" height="1.5" fill="#ce9178"/><rect x="46.50" y="98.05" width="3.72" height="1.5" fill="#ce9178"/><rect x="50.22" y="98.05" width="0.93" height="1.5" fill="#d4d4d4"/><rect x="51.15" y="98.05" width="0.93" height="1.5" fill="#d4d4d4"/><rect x="7.44" y="99.90" width="5.58" height="1.5" fill="#c586c0"/><rect x="13.95" y="99.90" width="0.93" height="1.5" fill="#b5cea8"/><rect x="14.88" y="99.90" width="0.93" height="1.5" fill="#d4d4d4"/><rect x="3.72" y="101.75" width="0.93" height="1.5" fill="#d4d4d4"/><rect x="3.72" y="103.60" width="1.86" height="1.5" fill="#c586c0"/><rect x="6.51" y="103.60" width="0.93" height="1.5" fill="#d4d4d4"/><rect x="7.44" y="103.60" width="0.93" height="1.5" fill="#9cdcfe"/><rect x="9.30" y="103.60" width="0.93" height="1.5" fill="#d4d4d4"/><rect x="11.16" y="103.60" width="0.93" height="1.5" fill="#b5cea8"/><rect x="12.09" y="103.60" width="0.93" height="1.5" fill="#d4d4d4"/><rect x="13.95" y="103.60" width="0.93" height="1.5" fill="#d4d4d4"/><rect x="7.44" y="105.45" width="6.51" height="1.5" fill="#dcdcaa"/><rect x="13.95" y="105.45" width="0.93" height="1.5" fill="#d4d4d4"/><rect x="14.88" y="105.45" width="5.58" height="1.5" fill="#9cdcfe"/><rect x="20.46" y="105.45" width="0.93" height="1.5" fill="#d4d4d4"/><rect x="22.32" y="105.45" width="5.58" height="1.5" fill="#ce9178"/><rect x="28.83" y="105.45" width="3.72" height="1.5" fill="#ce9178"/><rect x="33.48" y="105.45" width="1.86" height="1.5" fill="#ce9178"/><rect x="36.27" y="105.45" width="13.95" height="1.5" fill="#ce9178"/><rect x="50.22" y="105.45" width="0.93" height="1.5" fill="#d4d4d4"/><rect x="51.15" y="105.45" width="0.93" height="1.5" fill="#d4d4d4"/><rect x="7.44" y="107.30" width="5.58" height="1.5" fill="#c586c0"/><rect x="13.95" y="107.30" width="0.93" height="1.5" fill="#b5cea8"/><rect x="14.88" y="107.30" width="0.93" height="1.5" fill="#d4d4d4"/><rect x="3.72" y="109.15" width="0.93" height="1.5" fill="#d4d4d4"/><rect x="3.72" y="112.85" width="5.58" height="1.5" fill="#569cd6"/><rect x="10.23" y="112.85" width="0.93" height="1.5" fill="#d4d4d4"/><rect x="11.16" y="112.85" width="2.79" height="1.5" fill="#9cdcfe"/><rect x="14.88" y="112.85" width="0.93" height="1.5" fill="#d4d4d4"/><rect x="16.74" y="112.85" width="3.72" height="1.5" fill="#569cd6"/><rect x="20.46" y="112.85" width="0.93" height="1.5" fill="#d4d4d4"/><rect x="3.72" y="114.70" width="1.86" height="1.5" fill="#c586c0"/><rect x="6.51" y="114.70" width="0.93" height="1.5" fill="#d4d4d4"/><rect x="7.44" y="114.70" width="0.93" height="1.5" fill="#9cdcfe"/><rect x="9.30" y="114.70" width="0.93" height="1.5" fill="#d4d4d4"/><rect x="11.16" y="114.70" width="0.93" height="1.5" fill="#b5cea8"/><rect x="12.09" y="114.70" width="0.93" height="1.5" fill="#d4d4d4"/><rect x="13.95" y="114.70" width="0.93" height="1.5" fill="#d4d4d4"/><rect x="7.44" y="116.55" width="2.79" height="1.5" fill="#9cdcfe"/><rect x="11.16" y="116.55" width="0.93" height="1.5" fill="#d4d4d4"/><rect x="13.02" y="116.55" width="5.58" height="1.5" fill="#dcdcaa"/><rect x="18.60" y="116.55" width="0.93" height="1.5" fill="#d4d4d4"/><rect x="19.53" y="116.55" width="5.58" height="1.5" fill="#569cd6"/><rect x="25.11" y="116.55" width="0.93" height="1.5" fill="#d4d4d4"/><rect x="26.04" y="116.55" width="5.58" height="1.5" fill="#569cd6"/><rect x="31.62" y="116.55" width="0.93" height="1.5" fill="#d4d4d4"/><rect x="33.48" y="116.55" width="0.93" height="1.5" fill="#d4d4d4"/><rect x="35.34" y="116.55" width="0.93" height="1.5" fill="#d4d4d4"/><rect x="36.27" y="116.55" width="5.58" height="1.5" fill="#569cd6"/><rect x="41.85" y="116.55" width="0.93" height="1.5" fill="#d4d4d4"/><rect x="42.78" y="116.55" width="0.93" height="1.5" fill="#9cdcfe"/><rect x="43.71" y="116.55" width="0.93" height="1.5" fill="#d4d4d4"/><rect x="44.64" y="116.55" width="0.93" height="1.5" fill="#d4d4d4"/><rect x="7.44" y="118.40" width="1.86" height="1.5" fill="#c586c0"/><rect x="10.23" y="118.40" width="0.93" height="1.5" fill="#d4d4d4"/><rect x="11.16" y="118.40" width="0.93" height="1.5" fill="#d4d4d4"/><rect x="12.09" y="118.40" width="2.79" height="1.5" fill="#9cdcfe"/><rect x="14.88" y="118.40" width="0.93" height="1.5" fill="#d4d4d4"/><rect x="16.74" y="118.40" width="0.93" height="1.5" fill="#d4d4d4"/><rect x="11.16" y="120.25" width="6.51" height="1.5" fill="#dcdcaa"/><rect x="17.67" y="120.25" width="0.93" height="1.5" fill="#d4d4d4"/><rect x="18.60" y="120.25" width="5.58" height="1.5" fill="#9cdcfe"/><rect x="24.18" y="120.25" width="0.93" height="1.5" fill="#d4d4d4"/><rect x="26.04" y="120.25" width="6.51" height="1.5" fill="#ce9178"/><rect x="33.48" y="120.25" width="9.30" height="1.5" fill="#ce9178"/><rect x="43.71" y="120.25" width="8.37" height="1.5" fill="#ce9178"/><rect x="52.08" y="120.25" width="0.93" height="1.5" fill="#d4d4d4"/><rect x="53.01" y="120.25" width="0.93" height="1.5" fill="#d4d4d4"/><rect x="11.16" y="122.10" width="5.58" height="1.5" fill="#c586c0"/><rect x="17.67" y="122.10" width="0.93" height="1.5" fill="#b5cea8"/><rect x="18.60" y="122.10" width="0.93" height="1.5" fill="#d4d4d4"/><rect x="7.44" y="123.95" width="0.93" height="1.5" fill="#d4d4d4"/><rect x="3.72" y="125.80" width="0.93" height="1.5" fill="#d4d4d4"/><rect x="3.72" y="129.50" width="2.79" height="1.5" fill="#c586c0"/><rect x="7.44" y="129.50" width="0.93" height="1.5" fill="#d4d4d4"/><rect x="8.37" y="129.50" width="2.79" height="1.5" fill="#569cd6"/><rect x="12.09" y="129.50" width="0.93" height="1.5" fill="#9cdcfe"/><rect x="13.95" y="129.50" width="0.93" height="1.5" fill="#d4d4d4"/><rect x="15.81" y="129.50" width="0.93" height="1.5" fill="#b5cea8"/><rect x="16.74" y="129.50" width="0.93" height="1.5" fill="#d4d4d4"/><rect x="18.60" y="129.50" width="0.93" height="1.5" fill="#9cdcfe"/><rect x="20.46" y="129.50" width="0.93" height="1.5" fill="#d4d4d4"/><rect x="22.32" y="129.50" width="0.93" height="1.5" fill="#9cdcfe"/><rect x="23.25" y="129.50" width="0.93" height="1.5" fill="#d4d4d4"/><rect x="25.11" y="129.50" width="0.93" height="1.5" fill="#d4d4d4"/><rect x="26.04" y="129.50" width="0.93" height="1.5" fill="#d4d4d4"/><rect x="26.97" y="129.50" width="0.93" height="1.5" fill="#9cdcfe"/><rect x="27.90" y="129.50" width="0.93" height="1.5" fill="#d4d4d4"/><rect x="29.76" y="129.50" width="0.93" height="1.5" fill="#d4d4d4"/><rect x="7.44" y="131.35" width="1.86" height="1.5" fill="#c586c0"/><rect x="10.23" y="131.35" width="0.93" height="1.5" fill="#d4d4d4"/><rect x="11.16" y="131.35" width="4.65" height="1.5" fill="#dcdcaa"/><rect x="15.81" y="131.35" width="0.93" height="1.5" fill="#d4d4d4"/><rect x="16.74" y="131.35" width="4.65" height="1.5" fill="#ce9178"/><rect x="21.39" y="131.35" width="0.93" height="1.5" fill="#d4d4d4"/><rect x="23.25" y="131.35" width="0.93" height="1.5" fill="#d4d4d4"/><rect x="24.18" y="131.35" width="2.79" height="1.5" fill="#9cdcfe"/><rect x="26.97" y="131.35" width="0.93" height="1.5" fill="#d4d4d4"/><rect x="27.90" y="131.35" width="0.93" height="1.5" fill="#9cdcfe"/><rect x="28.83" y="131.35" width="0.93" height="1.5" fill="#d4d4d4"/><rect x="29.76" y="131.35" width="0.93" height="1.5" fill="#d4d4d4"/><rect x="31.62" y="131.35" width="0.93" height="1.5" fill="#d4d4d4"/><rect x="32.55" y="131.35" width="0.93" height="1.5" fill="#d4d4d4"/><rect x="34.41" y="131.35" width="0.93" height="1.5" fill="#b5cea8"/><rect x="35.34" y="131.35" width="0.93" height="1.5" fill="#d4d4d4"/><rect x="37.20" y="131.35" width="0.93" height="1.5" fill="#d4d4d4"/><rect x="11.16" y="133.20" width="6.51" height="1.5" fill="#dcdcaa"/><rect x="17.67" y="133.20" width="0.93" height="1.5" fill="#d4d4d4"/><rect x="18.60" y="133.20" width="5.58" height="1.5" fill="#9cdcfe"/><rect x="24.18" y="133.20" width="0.93" height="1.5" fill="#d4d4d4"/><rect x="26.04" y="133.20" width="6.51" height="1.5" fill="#ce9178"/><rect x="33.48" y="133.20" width="1.86" height="1.5" fill="#ce9178"/><rect x="36.27" y="133.20" width="3.72" height="1.5" fill="#ce9178"/><rect x="40.92" y="133.20" width="5.58" height="1.5" fill="#ce9178"/><rect x="47.43" y="133.20" width="4.65" height="1.5" fill="#ce9178"/><rect x="52.08" y="133.20" width="0.93" height="1.5" fill="#d4d4d4"/><rect x="53.94" y="133.20" width="0.93" height="1.5" fill="#9cdcfe"/><rect x="55.80" y="133.20" width="0.93" height="1.5" fill="#d4d4d4"/><rect x="57.66" y="133.20" width="0.93" height="1.5" fill="#b5cea8"/><rect x="58.59" y="133.20" width="0.93" height="1.5" fill="#d4d4d4"/><rect x="59.52" y="133.20" width="0.93" height="1.5" fill="#d4d4d4"/><rect x="11.16" y="135.05" width="3.72" height="1.5" fill="#dcdcaa"/><rect x="14.88" y="135.05" width="0.93" height="1.5" fill="#d4d4d4"/><rect x="15.81" y="135.05" width="2.79" height="1.5" fill="#9cdcfe"/><rect x="18.60" y="135.05" width="0.93" height="1.5" fill="#d4d4d4"/><rect x="19.53" y="135.05" width="0.93" height="1.5" fill="#d4d4d4"/><rect x="11.16" y="136.90" width="5.58" height="1.5" fill="#c586c0"/><rect x="17.67" y="136.90" width="0.93" height="1.5" fill="#b5cea8"/><rect x="18.60" y="136.90" width="0.93" height="1.5" fill="#d4d4d4"/><rect x="7.44" y="138.75" width="0.93" height="1.5" fill="#d4d4d4"/><rect x="3.72" y="140.60" width="0.93" height="1.5" fill="#d4d4d4"/><rect x="3.72" y="144.30" width="4.65" height="1.5" fill="#dcdcaa"/><rect x="8.37" y="144.30" width="0.93" height="1.5" fill="#d4d4d4"/><rect x="9.30" y="144.30" width="2.79" height="1.5" fill="#9cdcfe"/><rect x="12.09" y="144.30" width="0.93" height="1.5" fill="#d4d4d4"/><rect x="13.95" y="144.30" width="0.93" height="1.5" fill="#d4d4d4"/><rect x="14.88" y="144.30" width="5.58" height="1.5" fill="#569cd6"/><rect x="20.46" y="144.30" width="0.93" height="1.5" fill="#d4d4d4"/><rect x="21.39" y="144.30" width="0.93" height="1.5" fill="#9cdcfe"/><rect x="22.32" y="144.30" width="0.93" height="1.5" fill="#d4d4d4"/><rect x="24.18" y="144.30" width="5.58" height="1.5" fill="#569cd6"/><rect x="29.76" y="144.30" width="0.93" height="1.5" fill="#d4d4d4"/><rect x="30.69" y="144.30" width="5.58" height="1.5" fill="#569cd6"/><rect x="36.27" y="144.30" width="0.93" height="1.5" fill="#d4d4d4"/><rect x="37.20" y="144.30" width="0.93" height="1.5" fill="#d4d4d4"/><rect x="39.06" y="144.30" width="9.30" height="1.5" fill="#9cdcfe"/><rect x="48.36" y="144.30" width="0.93" height="1.5" fill="#d4d4d4"/><rect x="49.29" y="144.30" width="0.93" height="1.5" fill="#d4d4d4"/><rect x="3.72" y="148.00" width="5.58" height="1.5" fill="#dcdcaa"/><rect x="9.30" y="148.00" width="0.93" height="1.5" fill="#d4d4d4"/><rect x="10.23" y="148.00" width="6.51" height="1.5" fill="#ce9178"/><rect x="17.67" y="148.00" width="6.51" height="1.5" fill="#ce9178"/><rect x="25.11" y="148.00" width="13.95" height="1.5" fill="#ce9178"/><rect x="39.06" y="148.00" width="0.93" height="1.5" fill="#d4d4d4"/><rect x="39.99" y="148.00" width="0.93" height="1.5" fill="#d4d4d4"/><rect x="3.72" y="149.85" width="2.79" height="1.5" fill="#c586c0"/><rect x="7.44" y="149.85" width="0.93" height="1.5" fill="#d4d4d4"/><rect x="8.37" y="149.85" width="2.79" height="1.5" fill="#569cd6"/><rect x="12.09" y="149.85" width="0.93" height="1.5" fill="#9cdcfe"/><rect x="13.95" y="149.85" width="0.93" height="1.5" fill="#d4d4d4"/><rect x="15.81" y="149.85" width="0.93" height="1.5" fill="#b5cea8"/><rect x="16.74" y="149.85" width="0.93" height="1.5" fill="#d4d4d4"/><rect x="18.60" y="149.85" width="0.93" height="1.5" fill="#9cdcfe"/><rect x="20.46" y="149.85" width="0.93" height="1.5" fill="#d4d4d4"/><rect x="22.32" y="149.85" width="0.93" height="1.5" fill="#9cdcfe"/><rect x="23.25" y="149.85" width="0.93" height="1.5" fill="#d4d4d4"/><rect x="25.11" y="149.85" width="0.93" height="1.5" fill="#d4d4d4"/><rect x="26.04" y="149.85" width="0.93" height="1.5" fill="#d4d4d4"/><rect x="26.97" y="149.85" width="0.93" height="1.5" fill="#9cdcfe"/><rect x="27.90" y="149.85" width="0.93" height="1.5" fill="#d4d4d4"/><rect x="29.76" y="149.85" width="0.93" height="1.5" fill="#d4d4d4"/><rect x="7.44" y="151.70" width="5.58" height="1.5" fill="#dcdcaa"/><rect x="13.02" y="151.70" width="0.93" height="1.5" fill="#d4d4d4"/><rect x="13.95" y="151.70" width="2.79" height="1.5" fill="#ce9178"/><rect x="17.67" y="151.70" width="0.93" height="1.5" fill="#ce9178"/><rect x="18.60" y="151.70" width="0.93" height="1.5" fill="#d4d4d4"/><rect x="20.46" y="151.70" width="2.79" height="1.5" fill="#9cdcfe"/><rect x="23.25" y="151.70" width="0.93" height="1.5" fill="#d4d4d4"/><rect x="24.18" y="151.70" width="0.93" height="1.5" fill="#9cdcfe"/><rect x="25.11" y="151.70" width="0.93" height="1.5" fill="#d4d4d4"/><rect x="26.04" y="151.70" width="0.93" height="1.5" fill="#d4d4d4"/><rect x="26.97" y="151.70" width="0.93" height="1.5" fill="#d4d4d4"/><rect x="3.72" y="153.55" width="0.93" height="1.5" fill="#d4d4d4"/><rect x="3.72" y="155.40" width="6.51" height="1.5" fill="#dcdcaa"/><rect x="10.23" y="155.40" width="0.93" height="1.5" fill="#d4d4d4"/><rect x="11.16" y="155.40" width="3.72" height="1.5" fill="#ce9178"/><rect x="14.88" y="155.40" width="0.93" height="1.5" fill="#d4d4d4"/><rect x="15.81" y="155.40" width="0.93" height="1.5" fill="#d4d4d4"/><rect x="3.72" y="159.10" width="3.72" height="1.5" fill="#dcdcaa"/><rect x="7.44" y="159.10" width="0.93" height="1.5" fill="#d4d4d4"/><rect x="8.37" y="159.10" width="2.79" height="1.5" fill="#9cdcfe"/><rect x="11.16" y="159.10" width="0.93" height="1.5" fill="#d4d4d4"/><rect x="12.09" y="159.10" width="0.93" height="1.5" fill="#d4d4d4"/><rect x="3.72" y="160.95" width="5.58" height="1.5" fill="#c586c0"/><rect x="10.23" y="160.95" width="0.93" height="1.5" fill="#b5cea8"/><rect x="11.16" y="160.95" width="0.93" height="1.5" fill="#d4d4d4"/><rect x="0.00" y="162.80" width="0.93" height="1.5" fill="#d4d4d4"/></g></svg>
<svg style="position:absolute;left:0;top:0" width="1024" height="772" viewBox="0 0 1024 772" fill="none"><path d="M632.4 17.1V10.3L642.2 16.6L636.1 20.7" stroke="#cccccc" stroke-width="1.25" fill="none" stroke-linecap="round" stroke-linejoin="round" /><path d="M628.5 20.2A2.6 2.6 0 0 1 633.7 20.2M627.8 21H634.4V23A3.3 3.3 0 0 1 627.8 23ZM626.6 22.3H627.8M634.4 22.3H635.6M626.8 25.3L628.2 24.2M635.4 25.3L634 24.2" stroke="#cccccc" stroke-width="1.1" fill="none" stroke-linecap="round" stroke-linejoin="round" /><path d="M646.3 16.1L649.9 19.6L653.5 16.1" stroke="#cccccc" stroke-width="1.2" fill="none" stroke-linecap="round" stroke-linejoin="round" /><path d="M676.66,18.46 L678.28,19.50 L677.56,21.25 L675.67,20.84 L674.74,21.77 L675.15,23.66 L673.40,24.38 L672.36,22.76 L671.04,22.76 L670.00,24.38 L668.25,23.66 L668.66,21.77 L667.73,20.84 L665.84,21.25 L665.12,19.50 L666.74,18.46 L666.74,17.14 L665.12,16.10 L665.84,14.35 L667.73,14.76 L668.66,13.83 L668.25,11.94 L670.00,11.22 L671.04,12.84 L672.36,12.84 L673.40,11.22 L675.15,11.94 L674.74,13.83 L675.67,14.76 L677.56,14.35 L678.28,16.10 L676.66,17.14Z" stroke="#cccccc" stroke-width="1.1" fill="none" stroke-linecap="round" stroke-linejoin="round" /><circle cx="671.7" cy="17.8" r="1.9" stroke="#cccccc" stroke-width="1.1" fill="none"/><path d="M691.8000000000001 12.5H701.4Q702.6 12.5 702.6 13.7V23.1Q702.6 24.3 701.4 24.3H691.8000000000001Q690.6 24.3 690.6 23.1V13.7Q690.6 12.5 691.8000000000001 12.5Z M696.6 12.5V24.3" stroke="#cccccc" stroke-width="1.1" fill="none" stroke-linecap="round" stroke-linejoin="round" /><circle cx="716" cy="18" r="1.05" stroke="none" stroke-width="1.0" fill="#cccccc"/><circle cx="720.5" cy="18" r="1.05" stroke="none" stroke-width="1.0" fill="#cccccc"/><circle cx="725" cy="18" r="1.05" stroke="none" stroke-width="1.0" fill="#cccccc"/><path d="M520.5 11.4H533.1V24.2H520.5Z" stroke="#a0a0a0" stroke-width="1.2" fill="none" stroke-linecap="round" stroke-linejoin="round" /><circle cx="526.8" cy="17.8" r="2.6" stroke="none" stroke-width="1.0" fill="#c8c8c8"/><path d="M543.3 14L551.5 22.2M551.5 14L543.3 22.2" stroke="#cccccc" stroke-width="1.4" fill="none" stroke-linecap="round" stroke-linejoin="round" /><path d="M17.1 14.3A4 4 0 1 0 17.1 20.3" stroke="#519aba" stroke-width="2.0" fill="none" stroke-linecap="round" stroke-linejoin="round" stroke-linecap="butt"/><path d="M18.2 17.3H21.4M19.8 15.7V18.9" stroke="#519aba" stroke-width="1.2" fill="none" stroke-linecap="round" stroke-linejoin="round" /><path d="M65.5 41L70.5 45.5L65.5 50" stroke="#a9a9a9" stroke-width="1.1" fill="none" stroke-linecap="round" stroke-linejoin="round" /><path d="M126.5 41L131.5 45.5L126.5 50" stroke="#a9a9a9" stroke-width="1.1" fill="none" stroke-linecap="round" stroke-linejoin="round" /><path d="M197.5 41L202.5 45.5L197.5 50" stroke="#a9a9a9" stroke-width="1.1" fill="none" stroke-linecap="round" stroke-linejoin="round" /><path d="M577.5 65.5L581 69.8L588.7 60.6" stroke="#ffffff" stroke-width="1.3" fill="none" stroke-linecap="round" stroke-linejoin="round" /><path d="M598.4 60.3L597.8 63.6L601 64.4M598.2 63.5C602 61.2 606.8 62 606.8 65.6C606.8 67.8 604.5 69.8 600.5 72" stroke="#ffffff" stroke-width="1.25" fill="none" stroke-linecap="round" stroke-linejoin="round" /><path d="M615.6 59.8H623.6L626.6 62.8V71.7H615.6Z" stroke="#ffffff" stroke-width="1.2" fill="none" stroke-linecap="round" stroke-linejoin="round" /><path d="M621.1 62.418V66.345M618.8000000000001 64.3815H623.4M618.8000000000001 68.844H623.4" stroke="#ffffff" stroke-width="1.2" fill="none" stroke-linecap="round" stroke-linejoin="round" /><path d="M604.5 490.3H612.8L615.8 493.3V502.7H604.5Z" stroke="#ffffff" stroke-width="1.2" fill="none" stroke-linecap="round" stroke-linejoin="round" /><path d="M610.15 493.028V497.12M607.85 495.074H612.4499999999999M607.85 499.724H612.4499999999999" stroke="#ffffff" stroke-width="1.2" fill="none" stroke-linecap="round" stroke-linejoin="round" /><path d="M681.3 503V490.5M676.3 495.5L681.3 490.5L686.3 495.5" stroke="#ffffff" stroke-width="1.3" fill="none" stroke-linecap="round" stroke-linejoin="round" /><path d="M705.5 490.5V503M700.5 498L705.5 503L710.5 498" stroke="#ffffff" stroke-width="1.3" fill="none" stroke-linecap="round" stroke-linejoin="round" /><path d="M867.65 11.5V23.2M861.3 17.35H874" stroke="#cccccc" stroke-width="1.2" fill="none" stroke-linecap="round" stroke-linejoin="round" /><path d="M888.3 12.4A6.4 6.4 0 1 1 887.2 21.2M886.3 11.3V14.6H889.6M892.7 14.3V17.9L895.4 20.4" stroke="#cccccc" stroke-width="1.2" fill="none" stroke-linecap="round" stroke-linejoin="round" /><path d="M922.16,18.56 L923.78,19.60 L923.06,21.35 L921.17,20.94 L920.24,21.87 L920.65,23.76 L918.90,24.48 L917.86,22.86 L916.54,22.86 L915.50,24.48 L913.75,23.76 L914.16,21.87 L913.23,20.94 L911.34,21.35 L910.62,19.60 L912.24,18.56 L912.24,17.24 L910.62,16.20 L911.34,14.45 L913.23,14.86 L914.16,13.93 L913.75,12.04 L915.50,11.32 L916.54,12.94 L917.86,12.94 L918.90,11.32 L920.65,12.04 L920.24,13.93 L921.17,14.86 L923.06,14.45 L923.78,16.20 L922.16,17.24Z" stroke="#cccccc" stroke-width="1.1" fill="none" stroke-linecap="round" stroke-linejoin="round" /><circle cx="917.2" cy="17.9" r="1.9" stroke="#cccccc" stroke-width="1.1" fill="none"/><circle cx="937" cy="17.8" r="1.05" stroke="none" stroke-width="1.0" fill="#cccccc"/><circle cx="941.8" cy="17.8" r="1.05" stroke="none" stroke-width="1.0" fill="#cccccc"/><circle cx="946.8" cy="17.8" r="1.05" stroke="none" stroke-width="1.0" fill="#cccccc"/><path d="M972.2 15.8V12.3H975.7M980.8 12.3H984.3V15.8M984.3 19.9V23.4H980.8M975.7 23.4H972.2V19.9" stroke="#cccccc" stroke-width="1.2" fill="none" stroke-linecap="round" stroke-linejoin="round" /><path d="M998.9 13.6L1007.2 22.3M1007.2 13.6L998.9 22.3" stroke="#cccccc" stroke-width="1.3" fill="none" stroke-linecap="round" stroke-linejoin="round" /><path d="M622.1 543V555.6M615.7 549.3H628.5" stroke="#cccccc" stroke-width="1.2" fill="none" stroke-linecap="round" stroke-linejoin="round" /><path d="M634.2 547.5L637.6 551.2L641 547.5" stroke="#cccccc" stroke-width="1.1" fill="none" stroke-linecap="round" stroke-linejoin="round" /><circle cx="654.3" cy="549.3" r="1.05" stroke="none" stroke-width="1.0" fill="#cccccc"/><circle cx="659.3" cy="549.3" r="1.05" stroke="none" stroke-width="1.0" fill="#cccccc"/><circle cx="664.6" cy="549.3" r="1.05" stroke="none" stroke-width="1.0" fill="#cccccc"/><path d="M689.5 547.0V543.5H693.0M698.3 543.5H701.8V547.0M701.8 551.5V555H698.3M693.0 555H689.5V551.5" stroke="#cccccc" stroke-width="1.2" fill="none" stroke-linecap="round" stroke-linejoin="round" /><path d="M716.3 545L724.8 553.5M724.8 545L716.3 553.5" stroke="#cccccc" stroke-width="1.3" fill="none" stroke-linecap="round" stroke-linejoin="round" /><path d="M642.1 569.9H651.9Q653.4 569.9 653.4 571.4V581.0Q653.4 582.5 651.9 582.5H642.1Q640.6 582.5 640.6 581.0V571.4Q640.6 569.9 642.1 569.9Z" stroke="#aaaaaa" stroke-width="1.1" fill="none" stroke-linecap="round" stroke-linejoin="round" /><path d="M643.8 573.68L646.616 576.2L643.8 578.72M647.0 579.224H650.456" stroke="#d0d0d0" stroke-width="1.1" fill="none" stroke-linecap="round" stroke-linejoin="round" /><path d="M725.2 569.8L731.6 581H718.8Z" stroke="#cca700" stroke-width="1.2" fill="none" stroke-linecap="round" stroke-linejoin="round" /><path d="M725.2 574V577.5M725.2 579.3V579.5" stroke="#cca700" stroke-width="1.2" fill="none" stroke-linecap="round" stroke-linejoin="round" /><path d="M642.1 590.3H651.9Q653.4 590.3 653.4 591.8V601.5Q653.4 603 651.9 603H642.1Q640.6 603 640.6 601.5V591.8Q640.6 590.3 642.1 590.3Z" stroke="#e0e0e0" stroke-width="1.1" fill="none" stroke-linecap="round" stroke-linejoin="round" /><path d="M643.8 594.11L646.616 596.65L643.8 599.1899999999999M647.0 599.698H650.456" stroke="#e8e8e8" stroke-width="1.1" fill="none" stroke-linecap="round" stroke-linejoin="round" /><path d="M661.5 590.5H671.0Q672.2 590.5 672.2 591.7V601.8Q672.2 603 671.0 603H661.5Q660.3 603 660.3 601.8V591.7Q660.3 590.5 661.5 590.5Z M666.25 590.5V603" stroke="#cccccc" stroke-width="1.1" fill="none" stroke-linecap="round" stroke-linejoin="round" /><path d="M686.5 591.4A5.45 5.45 0 1 1 681.9 592.2M679.2 591.4H682.3V594.6" stroke="#ffffff" stroke-width="1.2" fill="none" stroke-linecap="round" stroke-linejoin="round" /><path d="M698 592.4H709M700.8 592.4V590.6H705.9V592.4M699.2 592.4V601.6Q699.2 602.6 700.2 602.6H706.8Q707.8 602.6 707.8 601.6V592.4M702.2 594.8V600M705 594.8V600" stroke="#ffffff" stroke-width="1.2" fill="none" stroke-linecap="round" stroke-linejoin="round" /><path d="M719.5 597.0L723.295 601.5L731 591.5" stroke="#ffffff" stroke-width="1.2" fill="none" stroke-linecap="round" stroke-linejoin="round" /><path d="M644.2 613.5A3 3 0 0 1 650.2 613.5M642.2 615H652.2V619.5A5 5 0 0 1 642.2 619.5ZM639.8 617.5H642.2M652.2 617.5H654.6M640.3 612L642.2 614M654.1 612L652.2 614M640.3 624.2L642.6 622.4M654.1 624.2L651.8 622.4M645 616.5L649.4 621M649.4 616.5L645 621" stroke="#cccccc" stroke-width="1.05" fill="none" stroke-linecap="round" stroke-linejoin="round" /><circle cx="857.8" cy="757.3" r="2.9" stroke="#cccccc" stroke-width="1.1" fill="none"/><circle cx="863.6" cy="757.3" r="2.9" stroke="#cccccc" stroke-width="1.1" fill="none"/><path d="M855.2 759.5C854.4 761 854.5 763.5 856 764.8C857 765.6 858.5 765.8 859.5 765.8" stroke="#cccccc" stroke-width="1.1" fill="none" stroke-linecap="round" stroke-linejoin="round" /><circle cx="863.8" cy="764.6" r="3.4" stroke="none" stroke-width="1.0" fill="#181818"/><circle cx="863.8" cy="764.6" r="2.9" stroke="#cccccc" stroke-width="1.1" fill="none"/><path d="M862.4 764.1L863.6 763.5M864.2 765.6L865.3 765" stroke="#cccccc" stroke-width="0.9" fill="none" stroke-linecap="round" stroke-linejoin="round" /><circle cx="888.6" cy="760" r="1.4" stroke="#cccccc" stroke-width="1.1" fill="none"/><path d="M888.6 761.5V767.5M885.9 762.7A3.7 3.7 0 1 1 891.3 762.7M884 764.5A6 6 0 1 1 893.2 764.5" stroke="#cccccc" stroke-width="1.1" fill="none" stroke-linecap="round" stroke-linejoin="round" /><path d="M1000.4 764V759.5A3.6 3.6 0 0 1 1007.6 759.5V764L1009 765.5H999Z M1002.6 767.8H1005.4" stroke="#cccccc" stroke-width="1.1" fill="none" stroke-linecap="round" stroke-linejoin="round" /><path d="M763.2 99.2L765.8 101.8L771.2 95" stroke="#57a64a" stroke-width="1.3" fill="none" stroke-linecap="round" stroke-linejoin="round" /><path d="M763.2 216.0L765.8 218.60000000000002L771.2 211.8" stroke="#57a64a" stroke-width="1.3" fill="none" stroke-linecap="round" stroke-linejoin="round" /><path d="M766.2 240.4L769.4 243.6L766.2 246.79999999999998" stroke="#a0a0a0" stroke-width="1.0" fill="none" stroke-linecap="round" stroke-linejoin="round" /><path d="M766.2 392.1L769.4 395.3L766.2 398.5" stroke="#a0a0a0" stroke-width="1.0" fill="none" stroke-linecap="round" stroke-linejoin="round" /><g transform="translate(767.6 496) scale(0.88) translate(-767.6 -496)"><path d="M768.8000000000001 507.8L775.4 501.2M768.4 506.8L769.8000000000001 508.2" stroke="#bbbbbb" stroke-width="1.8" fill="none" stroke-linecap="round" stroke-linejoin="round" /><path d="M768.3000000000001 497.6L769.4 496.5L771.4 497.5L772.6 499.6L771.2 501L769.1 499.8Z" stroke="#bbbbbb" stroke-width="0.9" fill="none" stroke-linecap="round" stroke-linejoin="round" /><path d="M771.8000000000001 500.2L778.4 507.3" stroke="#bbbbbb" stroke-width="1.8" fill="none" stroke-linecap="round" stroke-linejoin="round" /><path d="M775.2 502.1A3 3 0 0 1 778.2 496.7L776.9 498.6L778.2 500L780.2 498.8A3 3 0 0 1 775.2 502.1" stroke="#bbbbbb" stroke-width="0.9" fill="none" stroke-linecap="round" stroke-linejoin="round" /></g><path d="M816.3 583.8L821.05 588.6L825.8 583.8" stroke="#ffffff" stroke-width="1.4" fill="none" stroke-linecap="round" stroke-linejoin="round" /><path d="M774.5 632.2L778.3 635.85L774.5 639.5" stroke="#cccccc" stroke-width="1.1" fill="none" stroke-linecap="round" stroke-linejoin="round" /><path d="M983.5 629.8H990.5L993.5 632.8V642.5H983.5ZM988.5 632.5V636.5M986.5 634.5H990.5M986.5 639.2H990.5M995.8 631.5V642" stroke="#cccccc" stroke-width="1.1" fill="none" stroke-linecap="round" stroke-linejoin="round" /><path d="M776.2 661.6V666.5A2.3 2.3 0 0 1 771.6 666.5V660A1.6 1.6 0 0 1 774.8 660V666A0.9 0.9 0 0 1 773 666V661.5" stroke="#cccccc" stroke-width="1.1" fill="none" stroke-linecap="round" stroke-linejoin="round" /><path d="M852.75 659.3V668.5M848.2 663.9H857.3" stroke="#cccccc" stroke-width="1.2" fill="none" stroke-linecap="round" stroke-linejoin="round" /><g transform="translate(949.3 711.5) scale(1.0) translate(-949.3 -711.5)"><path d="M950.5 723.3L957.0999999999999 716.7M950.0999999999999 722.3L951.5 723.7" stroke="#cccccc" stroke-width="2.0" fill="none" stroke-linecap="round" stroke-linejoin="round" /><path d="M950.0 713.1L951.0999999999999 712.0L953.0999999999999 713.0L954.3 715.1L952.9 716.5L950.8 715.3Z" stroke="#cccccc" stroke-width="1.0" fill="none" stroke-linecap="round" stroke-linejoin="round" /><path d="M953.5 715.7L960.0999999999999 722.8" stroke="#cccccc" stroke-width="2.0" fill="none" stroke-linecap="round" stroke-linejoin="round" /><path d="M956.9 717.6A3 3 0 0 1 959.9 712.2L958.5999999999999 714.1L959.9 715.5L961.9 714.3A3 3 0 0 1 956.9 717.6" stroke="#cccccc" stroke-width="1.0" fill="none" stroke-linecap="round" stroke-linejoin="round" /></g><path d="M973.8 711.9L987 718L973.8 724L975.8 718ZM975.8 718H980.5" stroke="#cccccc" stroke-width="1.2" fill="none" stroke-linecap="round" stroke-linejoin="round" /><path d="M992.2 716.2L995.5 719.6L998.8 716.2" stroke="#cccccc" stroke-width="1.1" fill="none" stroke-linecap="round" stroke-linejoin="round" /><path d="M802.7 716.3L806.0 719.8L809.3 716.3" stroke="#cccccc" stroke-width="1.1" fill="none" stroke-linecap="round" stroke-linejoin="round" /><path d="M850.2 716.3L853.9000000000001 719.8L857.6 716.3" stroke="#cccccc" stroke-width="1.1" fill="none" stroke-linecap="round" stroke-linejoin="round" /></svg>
<div class="t" style="left:27.00px;top:13.00px;font-size:12px;line-height:13.404px;color:#9d9d9d;font-family:'Liberation Sans', sans-serif;letter-spacing:0.074px;">lg.cpp</div>
<div class="t" style="left:140.00px;top:13.00px;font-size:12px;line-height:13.404px;color:#9d9d9d;font-family:'Liberation Sans', sans-serif;letter-spacing:0.035px;">lg.py</div>
<div class="t" style="left:252.00px;top:13.00px;font-size:12px;line-height:13.404px;color:#9d9d9d;font-family:'Liberation Sans', sans-serif;letter-spacing:-0.416px;">sy7.1.4.c</div>
<div class="t" style="left:365.80px;top:13.00px;font-size:12px;line-height:13.404px;color:#9d9d9d;font-family:'Liberation Sans', sans-serif;letter-spacing:-0.341px;">sy.7.3.2.c</div>
<div class="t" style="left:479.00px;top:13.00px;font-size:12px;line-height:13.404px;color:#ffffff;font-family:'Liberation Sans', sans-serif;letter-spacing:-0.069px;">main.c</div>
<div class="t" style="left:237.00px;top:12.00px;font-size:13px;line-height:14.521px;color:#519aba;font-family:'Liberation Sans', sans-serif;font-weight:bold;">C</div>
<div class="t" style="left:350.00px;top:12.00px;font-size:13px;line-height:14.521px;color:#519aba;font-family:'Liberation Sans', sans-serif;font-weight:bold;">C</div>
<div class="t" style="left:463.00px;top:12.00px;font-size:13px;line-height:14.521px;color:#519aba;font-family:'Liberation Sans', sans-serif;font-weight:bold;">C</div>
<div class="t" style="left:11.70px;top:39.50px;font-size:12px;line-height:13.404px;color:#a9a9a9;font-family:'Liberation Sans', sans-serif;letter-spacing:-0.677px;">cppPROJ</div>
<div class="t" style="left:75.00px;top:39.50px;font-size:12px;line-height:13.404px;color:#a9a9a9;font-family:'Liberation Sans', sans-serif;letter-spacing:-0.045px;">forvstest</div>
<div class="t" style="left:157.00px;top:39.50px;font-size:12px;line-height:13.404px;color:#a9a9a9;font-family:'Liberation Sans', sans-serif;letter-spacing:-0.269px;">main.c</div>
<div class="t" style="left:207.00px;top:39.50px;font-size:12px;line-height:13.404px;color:#a9a9a9;font-family:'Liberation Sans', sans-serif;letter-spacing:-1.008px;">...</div>
<div class="t" style="left:141.00px;top:38.50px;font-size:13px;line-height:14.521px;color:#519aba;font-family:'Liberation Sans', sans-serif;font-weight:bold;">C</div>
<div class="t" style="left:15.00px;top:577.00px;font-size:11.77px;line-height:13.333px;color:#181818;font-family:'Liberation Mono', monospace;"> * </div>
<div class="t" style="left:15.00px;top:689.00px;font-size:11.77px;line-height:13.333px;color:#181818;font-family:'Liberation Mono', monospace;"> * </div>
<div class="t" style="left:15.00px;top:577.00px;font-size:11.77px;line-height:13.333px;color:#cccccc;font-family:'Liberation Mono', monospace;">    Executing task: C/C++: g++.exe build active file </div>
<div class="t" style="left:15.00px;top:609.00px;font-size:11.77px;line-height:13.333px;color:#cccccc;font-family:'Liberation Mono', monospace;">Starting build...</div>
<div class="t" style="left:15.00px;top:673.00px;font-size:11.77px;line-height:13.333px;color:#cccccc;font-family:'Liberation Mono', monospace;">Build finished successfully.</div>
<div class="t" style="left:15.00px;top:689.00px;font-size:11.77px;line-height:13.333px;color:#cccccc;font-family:'Liberation Mono', monospace;">    Terminal will be reused by tasks, press any key to close it.</div>
<div class="t" style="left:15.60px;top:543.80px;font-size:11px;line-height:12.287px;color:#9d9d9d;font-family:'Liberation Sans', sans-serif;transform:scaleX(0.8243);transform-origin:0 0;">PROBLEMS</div>
<div class="t" style="left:88.50px;top:543.80px;font-size:11px;line-height:12.287px;color:#9d9d9d;font-family:'Liberation Sans', sans-serif;transform:scaleX(0.8622);transform-origin:0 0;">OUTPUT</div>
<div class="t" style="left:150.00px;top:543.80px;font-size:11px;line-height:12.287px;color:#9d9d9d;font-family:'Liberation Sans', sans-serif;transform:scaleX(0.8388);transform-origin:0 0;">DEBUG CONSOLE</div>
<div class="t" style="left:253.00px;top:543.80px;font-size:11px;line-height:12.287px;color:#e7e7e7;font-family:'Liberation Sans', sans-serif;transform:scaleX(0.8719);transform-origin:0 0;">TERMINAL</div>
<div class="t" style="left:324.00px;top:543.80px;font-size:11px;line-height:12.287px;color:#9d9d9d;font-family:'Liberation Sans', sans-serif;transform:scaleX(0.7957);transform-origin:0 0;">PORTS</div>
<div class="t" style="left:658.00px;top:570.50px;font-size:12px;line-height:13.404px;color:#cca700;font-family:'Liberation Sans', sans-serif;letter-spacing:-0.151px;">powersh...</div>
<div class="t" style="left:658.00px;top:612.50px;font-size:12px;line-height:13.404px;color:#cccccc;font-family:'Liberation Sans', sans-serif;letter-spacing:-0.132px;">cppdbg: sy7...</div>
<div class="t" style="left:634.00px;top:755.30px;font-size:11.2px;line-height:12.510px;color:#cccccc;font-family:'Liberation Sans', sans-serif;letter-spacing:-0.268px;">Ln 90, Col 1</div>
<div class="t" style="left:707.00px;top:755.30px;font-size:11.2px;line-height:12.510px;color:#cccccc;font-family:'Liberation Sans', sans-serif;letter-spacing:-0.471px;">Spaces: 4</div>
<div class="t" style="left:768.00px;top:755.30px;font-size:11.2px;line-height:12.510px;color:#cccccc;font-family:'Liberation Sans', sans-serif;letter-spacing:-0.551px;">UTF-8</div>
<div class="t" style="left:832.00px;top:755.30px;font-size:11.2px;line-height:12.510px;color:#cccccc;font-family:'Liberation Sans', sans-serif;letter-spacing:-1.094px;">C</div>
<div class="t" style="left:899.00px;top:755.30px;font-size:11.2px;line-height:12.510px;color:#cccccc;font-family:'Liberation Sans', sans-serif;letter-spacing:-0.427px;">Go Live</div>
<div class="t" style="left:950.00px;top:755.30px;font-size:11.2px;line-height:12.510px;color:#cccccc;font-family:'Liberation Sans', sans-serif;letter-spacing:-0.180px;">Win32</div>
<div class="t" style="left:761.60px;top:12.40px;font-size:11px;line-height:12.287px;color:#e7e7e7;font-family:'Liberation Sans', sans-serif;transform:scaleX(0.8579);transform-origin:0 0;">CHAT</div>
<div class="t" style="left:758.50px;top:39.90px;font-size:12px;line-height:13.404px;color:#cccccc;font-family:'Liberation Sans', sans-serif;letter-spacing:0.090px;">program. Expected outcome: a small todo list</div>
<div class="t" style="left:758.50px;top:58.60px;font-size:12px;line-height:13.404px;color:#cccccc;font-family:'Liberation Sans', sans-serif;letter-spacing:0.017px;">saved and the file contents read.</div>
<div class="t" style="left:779.00px;top:93.20px;font-size:11.2px;line-height:12.510px;color:#a0a0a0;font-family:'Liberation Sans', sans-serif;letter-spacing:-0.044px;">Created 2 todos</div>
<div class="t" style="left:758.50px;top:118.80px;font-size:12px;line-height:13.404px;color:#cccccc;font-family:'Liberation Sans', sans-serif;letter-spacing:0.149px;">I'll read the current</div>
<div class="t" style="left:868.00px;top:120.80px;font-size:10.2px;line-height:11.555px;color:#d0d0d0;font-family:'Liberation Mono', monospace;letter-spacing:-0.138px;">main.c</div>
<div class="t" style="left:909.70px;top:118.80px;font-size:12px;line-height:13.404px;color:#cccccc;font-family:'Liberation Sans', sans-serif;letter-spacing:0.253px;">to avoid</div>
<div class="t" style="left:758.50px;top:138.00px;font-size:12px;line-height:13.404px;color:#cccccc;font-family:'Liberation Sans', sans-serif;letter-spacing:0.144px;">overwriting useful code and to decide whether</div>
<div class="t" style="left:758.50px;top:156.80px;font-size:12px;line-height:13.404px;color:#cccccc;font-family:'Liberation Sans', sans-serif;letter-spacing:0.184px;">to modify or replace it. I'll fetch the file</div>
<div class="t" style="left:758.50px;top:175.50px;font-size:12px;line-height:13.404px;color:#cccccc;font-family:'Liberation Sans', sans-serif;letter-spacing:0.134px;">contents now.</div>
<div class="t" style="left:779.00px;top:210.00px;font-size:11.2px;line-height:12.510px;color:#a0a0a0;font-family:'Liberation Sans', sans-serif;letter-spacing:-1.017px;">Read</div>
<div class="t" style="left:813.70px;top:210.50px;font-size:9px;line-height:10.053px;color:#519aba;font-family:'Liberation Sans', sans-serif;font-weight:bold;">c</div>
<div class="t" style="left:824.80px;top:210.00px;font-size:11.2px;line-height:12.510px;color:#a0a0a0;font-family:'Liberation Sans', sans-serif;letter-spacing:-0.271px;">main.c</div>
<div class="t" style="left:778.70px;top:237.80px;font-size:11.2px;line-height:12.510px;color:#a0a0a0;font-family:'Liberation Sans', sans-serif;letter-spacing:0.035px;">Updating files and running tasks</div>
<div class="t" style="left:758.50px;top:265.00px;font-size:12px;line-height:13.404px;color:#cccccc;font-family:'Liberation Sans', sans-serif;letter-spacing:0.253px;">Now I'll add the sorting program to</div>
<div class="t" style="left:766.00px;top:283.00px;font-size:9px;line-height:10.053px;color:#519aba;font-family:'Liberation Sans', sans-serif;font-weight:bold;">c</div>
<div class="t" style="left:777.00px;top:283.00px;font-size:12px;line-height:13.404px;color:#cccccc;font-family:'Liberation Sans', sans-serif;letter-spacing:-0.069px;">main.c</div>
<div class="t" style="left:822.00px;top:283.00px;font-size:12px;line-height:13.404px;color:#cccccc;font-family:'Liberation Sans', sans-serif;letter-spacing:0.151px;">(expected outcome: file updated</div>
<div class="t" style="left:758.50px;top:301.70px;font-size:12px;line-height:13.404px;color:#cccccc;font-family:'Liberation Sans', sans-serif;letter-spacing:0.089px;">with a small C program that sorts numbers</div>
<div class="t" style="left:758.50px;top:319.80px;font-size:12px;line-height:13.404px;color:#cccccc;font-family:'Liberation Sans', sans-serif;letter-spacing:-0.105px;">ascending).</div>
<div class="t" style="left:765.50px;top:354.00px;font-size:11px;line-height:12.287px;color:#519aba;font-family:'Liberation Sans', sans-serif;font-weight:bold;">C</div>
<div class="t" style="left:779.00px;top:355.00px;font-size:10.5px;line-height:11.729px;color:#cccccc;font-family:'Liberation Sans', sans-serif;letter-spacing:-0.388px;">main.c</div>
<div class="t" style="left:816.00px;top:354.00px;font-size:11px;line-height:12.287px;color:#57a64a;font-family:'Liberation Sans', sans-serif;letter-spacing:-0.336px;font-weight:bold;">+90</div>
<div class="t" style="left:838.00px;top:354.00px;font-size:11px;line-height:12.287px;color:#e05252;font-family:'Liberation Sans', sans-serif;letter-spacing:-0.781px;font-weight:bold;">-1</div>
<div class="t" style="left:778.70px;top:389.30px;font-size:11.2px;line-height:12.510px;color:#a0a0a0;font-family:'Liberation Sans', sans-serif;letter-spacing:0.015px;">Running build task</div>
<div class="t" style="left:758.50px;top:416.80px;font-size:12px;line-height:13.404px;color:#cccccc;font-family:'Liberation Sans', sans-serif;letter-spacing:0.134px;">I'll run the workspace C/C++ build task</div>
<div class="t" style="left:758.50px;top:435.80px;font-size:12px;line-height:13.404px;color:#cccccc;font-family:'Liberation Sans', sans-serif;letter-spacing:0.137px;">(g++.exe) to compile</div>
<div class="t" style="left:877.50px;top:437.30px;font-size:10.2px;line-height:11.555px;color:#d0d0d0;font-family:'Liberation Mono', monospace;letter-spacing:0.078px;">forvstest/main.c</div>
<div class="t" style="left:982.50px;top:435.80px;font-size:12px;line-height:13.404px;color:#cccccc;font-family:'Liberation Sans', sans-serif;letter-spacing:0.234px;">and</div>
<div class="t" style="left:758.50px;top:454.80px;font-size:12px;line-height:13.404px;color:#cccccc;font-family:'Liberation Sans', sans-serif;letter-spacing:0.296px;">report the build output.</div>
<div class="t" style="left:783.20px;top:496.00px;font-size:12px;line-height:13.404px;color:#cccccc;font-family:'Liberation Sans', sans-serif;letter-spacing:-0.134px;">Allow task run?</div>
<div class="t" style="left:767.70px;top:528.50px;font-size:12px;line-height:13.404px;color:#cccccc;font-family:'Liberation Sans', sans-serif;letter-spacing:0.188px;">Allow Copilot to run the task</div>
<div class="t" style="left:928.00px;top:530.30px;font-size:10.2px;line-height:11.555px;color:#d0d0d0;font-family:'Liberation Mono', monospace;letter-spacing:0.263px;">C/C++:</div>
<div class="t" style="left:767.70px;top:549.50px;font-size:10.2px;line-height:11.555px;color:#d0d0d0;font-family:'Liberation Mono', monospace;letter-spacing:0.090px;">g++.exe build active file</div>
<div class="t" style="left:926.50px;top:548.00px;font-size:12px;line-height:13.404px;color:#cccccc;font-family:'Liberation Sans', sans-serif;">?</div>
<div class="t" style="left:773.50px;top:580.50px;font-size:12px;line-height:13.404px;color:#ffffff;font-family:'Liberation Sans', sans-serif;letter-spacing:-0.422px;">Allow</div>
<div class="t" style="left:849.50px;top:580.50px;font-size:12px;line-height:13.404px;color:#cccccc;font-family:'Liberation Sans', sans-serif;letter-spacing:-0.448px;">Skip</div>
<div class="t" style="left:788.00px;top:631.00px;font-size:10.5px;line-height:11.729px;color:#cccccc;font-family:'Liberation Sans', sans-serif;letter-spacing:-0.184px;">1 file changed</div>
<div class="t" style="left:858.00px;top:630.00px;font-size:11px;line-height:12.287px;color:#57a64a;font-family:'Liberation Sans', sans-serif;letter-spacing:-0.336px;">+90</div>
<div class="t" style="left:880.00px;top:630.00px;font-size:11px;line-height:12.287px;color:#e05252;font-family:'Liberation Sans', sans-serif;letter-spacing:-0.781px;">-1</div>
<div class="t" style="left:900.50px;top:630.00px;font-size:11px;line-height:12.287px;color:#ffffff;font-family:'Liberation Sans', sans-serif;letter-spacing:-0.401px;">Keep</div>
<div class="t" style="left:942.50px;top:630.00px;font-size:11px;line-height:12.287px;color:#cccccc;font-family:'Liberation Sans', sans-serif;letter-spacing:0.068px;">Undo</div>
<div class="t" style="left:797.00px;top:659.00px;font-size:10.5px;line-height:11.729px;color:#519aba;font-family:'Liberation Sans', sans-serif;font-weight:bold;">C</div>
<div class="t" style="left:811.00px;top:658.00px;font-size:11px;line-height:12.287px;color:#a0a0a0;font-family:'Liberation Sans', sans-serif;letter-spacing:-0.481px;font-style:italic;">main.c</div>
<div class="t" style="left:765.00px;top:685.50px;font-size:12.5px;line-height:13.963px;color:#8f8f8f;font-family:'Liberation Sans', sans-serif;letter-spacing:-0.251px;">Add context (#), extensions (@), commands</div>
<div class="t" style="left:770.60px;top:712.00px;font-size:11px;line-height:12.287px;color:#cccccc;font-family:'Liberation Sans', sans-serif;letter-spacing:-0.338px;">Agent</div>
<div class="t" style="left:824.60px;top:712.00px;font-size:11px;line-height:12.287px;color:#cccccc;font-family:'Liberation Sans', sans-serif;letter-spacing:-0.347px;">Auto</div>
<div class="t" style="left:531.60px;top:491.40px;font-size:11.2px;line-height:12.510px;color:#ffffff;font-family:'Liberation Sans', sans-serif;letter-spacing:-0.580px;">Keep</div>
<div class="t" style="left:566.00px;top:491.40px;font-size:11.2px;line-height:12.510px;color:#ffffff;font-family:'Liberation Sans', sans-serif;letter-spacing:-0.083px;">Undo</div>
<div class="t" style="left:636.00px;top:491.40px;font-size:11.2px;line-height:12.510px;color:#ffffff;font-family:'Liberation Sans', sans-serif;letter-spacing:-0.300px;">1 of 1</div>
<div class="t" style="left:813.80px;top:753.80px;font-size:11px;line-height:12.287px;color:#cccccc;font-family:'Liberation Sans', sans-serif;letter-spacing:0.297px;">{ }</div>
</body></html>
